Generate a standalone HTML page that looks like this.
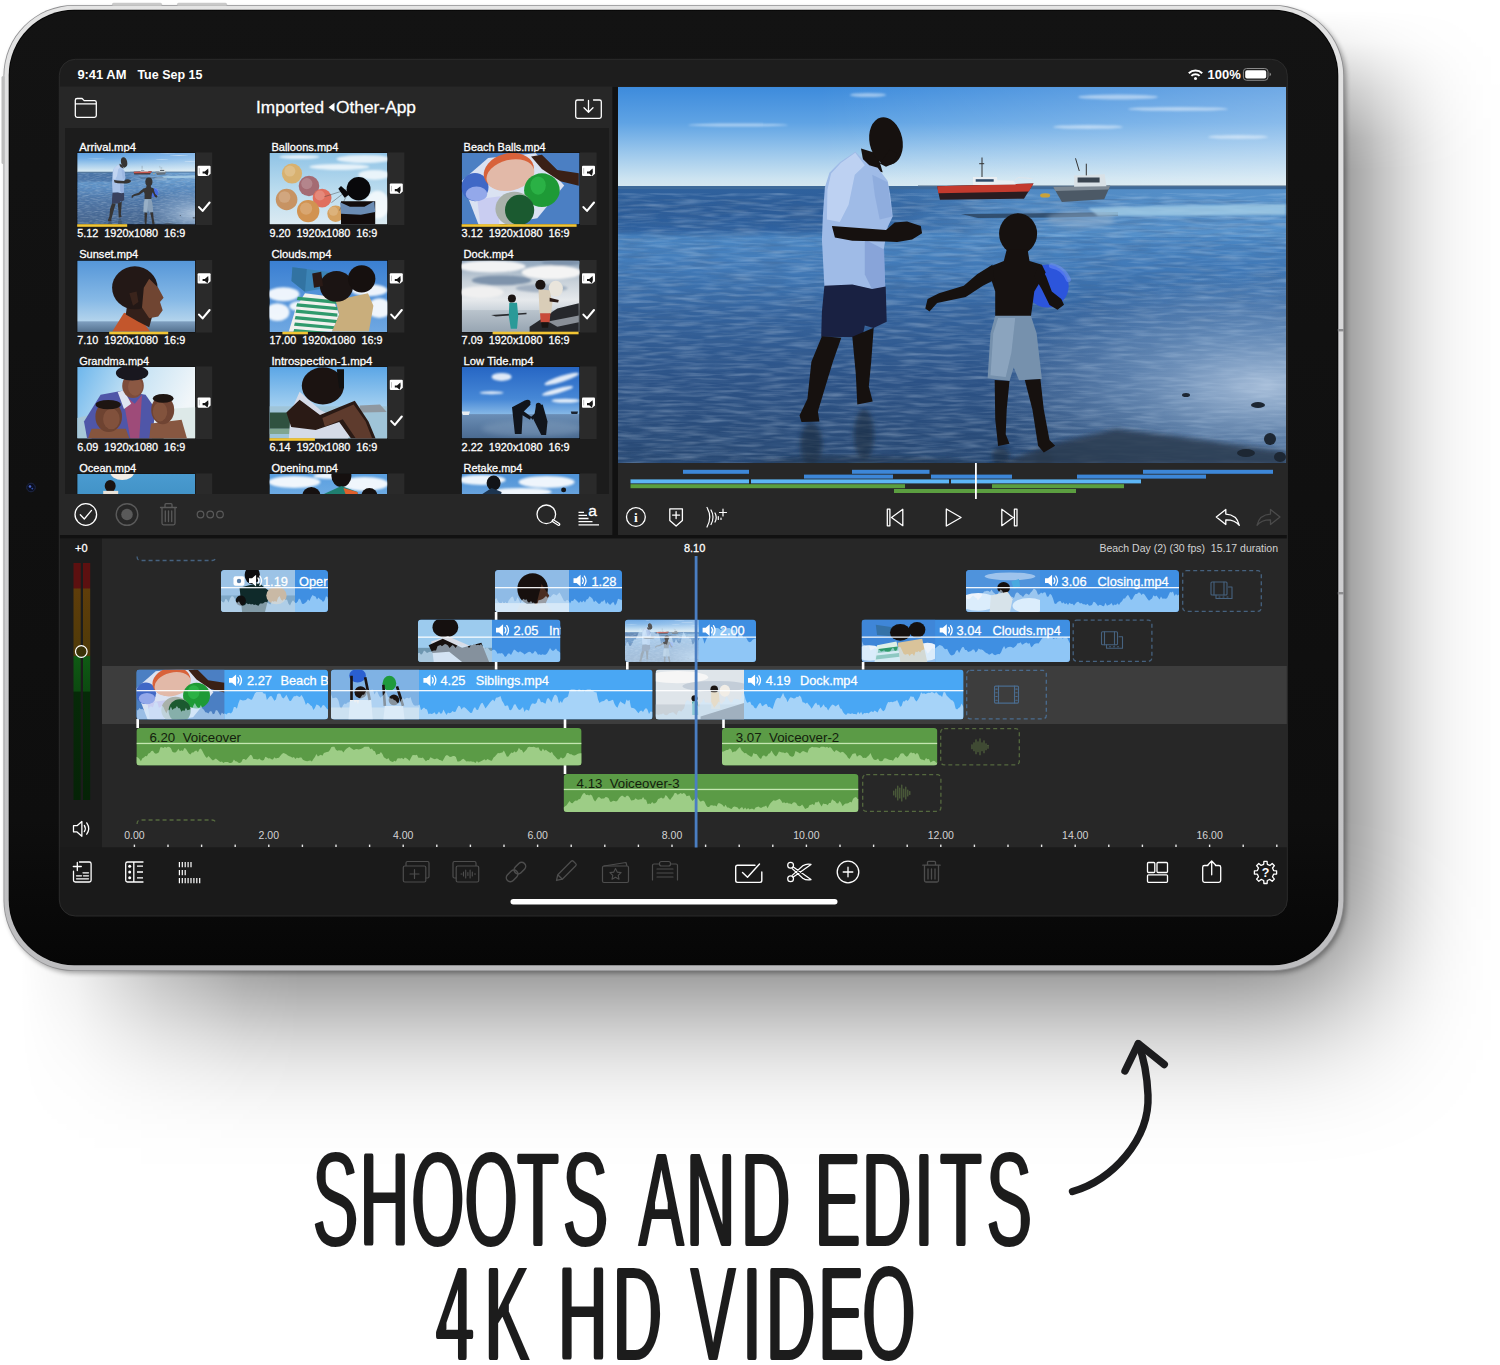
<!DOCTYPE html><html lang="en"><head><meta charset="utf-8"><title>Shoots and edits 4K HD video</title>
<style>html,body{margin:0;padding:0;background:#fff}body{width:1500px;height:1365px;overflow:hidden;position:relative}svg{display:block}text{font-family:"Liberation Sans",sans-serif;white-space:pre}</style></head><body>
<svg width="1500" height="1365" viewBox="0 0 1500 1365">
<defs>
<linearGradient id="gSky" x1="0" y1="0" x2="0" y2="1">
<stop offset="0" stop-color="#3d8bdc"/><stop offset=".35" stop-color="#5fa3e4"/><stop offset=".65" stop-color="#9cc8ec"/><stop offset=".9" stop-color="#cde4f1"/><stop offset="1" stop-color="#d8e9ef"/></linearGradient>
<linearGradient id="gSkyR" x1="0" y1="0" x2="1" y2="0"><stop offset=".3" stop-color="#fff" stop-opacity="0"/><stop offset="1" stop-color="#fff" stop-opacity=".26"/></linearGradient>
<linearGradient id="gSea" x1="0" y1="0" x2="0" y2="1">
<stop offset="0" stop-color="#2f619d"/><stop offset=".08" stop-color="#2c5c98"/><stop offset=".15" stop-color="#2f62a0"/><stop offset=".18" stop-color="#4a86c3"/><stop offset=".3" stop-color="#4078b6"/><stop offset=".45" stop-color="#34639d"/><stop offset=".7" stop-color="#2c5286"/><stop offset="1" stop-color="#284872"/></linearGradient>
<linearGradient id="gSeaR" x1="0" y1="0" x2="1" y2="0"><stop offset="0" stop-color="#5b97d0" stop-opacity="0"/><stop offset=".35" stop-color="#5b97d0" stop-opacity="0"/><stop offset=".6" stop-color="#5b97d0" stop-opacity=".75"/><stop offset="1" stop-color="#5b97d0" stop-opacity=".9"/></linearGradient>
<radialGradient id="gGlow" cx=".97" cy=".72" r=".42"><stop offset="0" stop-color="#c6d9ee" stop-opacity=".8"/><stop offset=".5" stop-color="#9fbfe0" stop-opacity=".4"/><stop offset="1" stop-color="#9fbfe0" stop-opacity="0"/></radialGradient>
<filter id="fRip" x="0" y="0" width="1" height="1"><feTurbulence type="fractalNoise" baseFrequency="0.035 0.3" numOctaves="2" seed="7"/><feColorMatrix type="matrix" values="0 0 0 0 0.8  0 0 0 0 0.9  0 0 0 0 1  1.5 0 0 0 -0.62"/></filter>
<filter id="fRipD" x="0" y="0" width="1" height="1"><feTurbulence type="fractalNoise" baseFrequency="0.03 0.28" numOctaves="2" seed="3"/><feColorMatrix type="matrix" values="0 0 0 0 0.06  0 0 0 0 0.14  0 0 0 0 0.3  0 1.6 0 0 -0.6"/></filter>
<filter id="fB2"><feGaussianBlur stdDeviation="2.5"/></filter>
<filter id="fB1"><feGaussianBlur stdDeviation="1"/></filter>
<g id="beach"><rect width="668" height="102" fill="url(#gSky)"/>
<rect width="668" height="102" fill="url(#gSkyR)"/>
<g fill="#fff" opacity=".45" filter="url(#fB1)"><ellipse cx="250" cy="8" rx="18" ry="2"/><ellipse cx="500" cy="10" rx="40" ry="2.5"/><ellipse cx="470" cy="40" rx="35" ry="2"/><ellipse cx="560" cy="22" rx="50" ry="2"/><ellipse cx="120" cy="38" rx="50" ry="1.5"/><ellipse cx="620" cy="50" rx="30" ry="2"/></g>
<rect y="102" width="668" height="274" fill="url(#gSea)"/>
<rect x="0" y="102" width="668" height="48" fill="url(#gSeaR)"/>
<rect y="112" width="668" height="264" filter="url(#fRipD)" opacity=".5"/>
<rect y="106" width="668" height="270" filter="url(#fRip)" opacity=".38"/>
<rect y="102" width="668" height="274" fill="url(#gGlow)"/>
<rect y="99" width="668" height="3.2" fill="#3f6b9a"/>
<rect x="300" y="98.2" width="368" height="1.4" fill="#5d7893" opacity=".7"/>
<path d="M343 127 L440 126 L500 125 L500 129 L440 130.5 L360 131 Z" fill="#2b4563" opacity=".85"/>
<path d="M470 121 L560 118.5 L668 117 L668 128 L560 129 L480 129 Z" fill="#a3cee8" opacity=".8" filter="url(#fB1)"/>
<polygon points="319.2,99.2 415.5,96.5 406,111.7 321.9,112.8" fill="#2a1c20"/>
<polygon points="319.2,99.2 415.5,96.5 410.8,104.6 320.3,106.3" fill="#c33a2e"/>
<polygon points="355,90 378.9,90 379.4,93.2 395.7,93.8 397.8,97.6 355,98.1" fill="#e9eef2"/>
<rect x="357.7" y="92.2" width="18" height="2.5" fill="#2d4a6a"/>
<path d="M364 70.5 V90 M361.2 76.7 h5" stroke="#333" stroke-width="1" fill="none"/>
<path d="M395.7 93.8 L400.5 90.5 L414.6 91.6" stroke="#dfe5ea" stroke-width=".8" fill="none"/>
<polygon points="435.2,99.7 492.2,98.7 486.2,112.2 443.9,114.9" fill="#4c5966"/>
<polygon points="435.2,99.7 492.2,98.7 490.5,102.5 437.4,104.1" fill="#7d8994"/>
<polygon points="456.1,88.4 486.7,87.3 488.4,99.2 456.1,99.7" fill="#d9e1e6"/>
<rect x="459.6" y="90.5" width="22" height="5" fill="#3a4550"/>
<path d="M468.3 76.7 V88.4 M457.5 71.3 L461.3 84" stroke="#333" stroke-width="1" fill="none"/>
<ellipse cx="462.9" cy="132.3" rx="34" ry="9" fill="#9db6cf" opacity=".45" filter="url(#fB2)"/>
<ellipse cx="427.1" cy="108.4" rx="5" ry="2.2" fill="#c9a23a"/>
<g fill="#14202e" opacity=".5" filter="url(#fB2)"><ellipse cx="193.2" cy="357.3" rx="11" ry="22"/><ellipse cx="246" cy="347.8" rx="10" ry="26"/><ellipse cx="382.9" cy="369.5" rx="9" ry="10"/><ellipse cx="426.3" cy="373.5" rx="9" ry="9"/></g>
<polygon points="380,378 430,358 498,342 556,349 668,365 668,378" fill="#2a3a50" opacity=".85" filter="url(#fB2)"/>
<polygon points="120,378 200,368 330,372 380,378" fill="#22344c" opacity=".6" filter="url(#fB2)"/>
<g fill="#1d2733"><ellipse cx="640" cy="318" rx="7" ry="3"/><ellipse cx="652" cy="352" rx="6" ry="6"/><ellipse cx="628" cy="366" rx="9" ry="4"/><ellipse cx="568" cy="308" rx="4" ry="2"/><ellipse cx="662" cy="370" rx="6" ry="5"/></g>
<polygon points="243,61.6 259.2,66.6 264.7,85.3 246.8,82.8" fill="#16110f"/>
<ellipse cx="268" cy="54.1" rx="16.5" ry="24" transform="rotate(-12 268 54.1)" fill="#16110f"/>
<polygon points="271.7,62.8 279.2,66.6 275.4,76.6 268,79.8 261.7,76.6" fill="#16110f"/>
<polygon points="237.3,64.8 221.8,75.3 211.4,85.8 206.9,100.2 204.9,127.6 203.9,152.6 206.4,199.4 234.3,197.9 254.2,202.4 267.2,199.9 265.7,162.5 269.7,140.1 274.7,129.6 272.2,107.7 269.7,94 259.7,80.8 251.3,78.3" fill="#9fbbe7"/>
<polygon points="237.3,65.8 223.1,75.8 213.1,86.5 209.4,102.7 208.9,132.6 221.8,135.1 230.6,117.7 236.8,87.8 246.8,78.3" fill="#c2d5f3" opacity=".85"/>
<polygon points="246.8,152.6 266.2,162.5 267.2,199.9 254.2,202.4 246.8,187.5" fill="#829fd6" opacity=".8"/>
<polygon points="254.2,87.8 269.7,95.2 274.2,129.6 261.7,132.6 256.7,107.7" fill="#86a3d8" opacity=".6"/>
<polygon points="213.9,138.9 234.3,140.6 268,143.1 276.7,135.6 289.1,134.6 302.8,138.9 304.1,146.3 294.1,152.6 279.2,155.1 268,154.6 234.3,153.8 216.9,150.6" fill="#16110f"/>
<polygon points="206.4,198.7 234.3,197.4 254.2,201.9 267.7,199.4 268.7,234.8 255.5,241 246.8,238.5 244.3,250.3 203.2,249.8 203.9,224.8" fill="#192142"/>
<polygon points="203.9,249.3 223.3,250.8 214.9,274.7 207.4,299.6 199.9,324.5 201.4,334.5 183.5,335 181.5,328.5 189.4,312.1 193.4,274.7" fill="#16110f"/>
<polygon points="234.3,249.8 255.7,240.8 253.2,274.7 250.8,299.6 254.7,314.6 239.3,317.5 237.8,287.1" fill="#16110f"/>
<circle cx="429.2" cy="199.1" r="21.5" fill="#2c55dc"/>
<path d="M433.4 178.7 a21.5 21.5 0 0 1 17 14" stroke="#6f90ff" stroke-width="5" fill="none" opacity=".55" stroke-linecap="round"/>
<ellipse cx="400.1" cy="146.7" rx="19" ry="20.5" fill="#16110f"/>
<polygon points="388.7,162.5 409.6,162.5 411.5,174 423.9,177.8 427.7,185.4 416.3,204.4 412.9,229.6 377.2,229.6 377.2,204.4 373.4,193 371.5,179.7 385.8,174" fill="#16110f"/>
<polygon points="374.4,177.8 359.1,187.3 345.8,198.7 321,206.3 309.6,212 307.3,221.6 311.5,224.4 319.1,215.9 347.7,210.1 364.9,198.7 376.3,193" fill="#16110f"/>
<polygon points="421,176.8 428.1,189.2 433.8,204.4 443.3,212 446,217.8 439.5,222.7 431.5,218.1 423.9,202.5 416.3,189.2" fill="#16110f"/>
<polygon points="377.2,228.8 412.9,228.8 418.6,246.3 423.9,292 401,293.2 395.7,280.6 391.5,294 369.6,291.3 372.5,246.3" fill="#7691ad"/>
<polygon points="380.1,231.1 397.2,231.1 393.4,265.4 387.7,290.1 372.5,288.2 375.3,246.3" fill="#93abc4" opacity=".75"/>
<polygon points="376.7,293 391.5,294 388.7,322.5 387.7,347.3 391.5,356.8 380.1,359.1 377.2,332" fill="#16110f"/>
<polygon points="406.8,293 422.4,292 425.8,322.5 431.5,353 437.2,358.7 425.8,365.4 420.1,358.7 414.4,322.5" fill="#16110f"/></g>
<filter id="fShadow" filterUnits="userSpaceOnUse" x="-600" y="-600" width="2400" height="2300"><feGaussianBlur stdDeviation="62 75"/></filter>
<linearGradient id="lgTop" gradientUnits="userSpaceOnUse" x1="0" y1="10" x2="0" y2="170"><stop offset="0" stop-color="#fff" stop-opacity="0"/><stop offset=".2" stop-color="#fff" stop-opacity=".12"/><stop offset=".5" stop-color="#fff" stop-opacity=".55"/><stop offset=".8" stop-color="#fff" stop-opacity=".9"/><stop offset="1" stop-color="#fff" stop-opacity="1"/></linearGradient>
<linearGradient id="lgLeft" gradientUnits="userSpaceOnUse" x1="20" y1="0" x2="300" y2="0"><stop offset="0" stop-color="#fff" stop-opacity="0"/><stop offset=".2" stop-color="#fff" stop-opacity=".15"/><stop offset=".5" stop-color="#fff" stop-opacity=".6"/><stop offset=".8" stop-color="#fff" stop-opacity=".92"/><stop offset="1" stop-color="#fff" stop-opacity="1"/></linearGradient>
<mask id="mTop" maskUnits="userSpaceOnUse" x="0" y="0" width="1500" height="1365"><rect width="1500" height="1365" fill="url(#lgTop)"/></mask>
<mask id="mLeft" maskUnits="userSpaceOnUse" x="0" y="0" width="1500" height="1365"><rect width="1500" height="1365" fill="url(#lgLeft)"/></mask>
<linearGradient id="gFrame" x1="0" y1="0" x2="0" y2="1"><stop offset="0" stop-color="#e4e4e4"/><stop offset=".5" stop-color="#d2d2d4"/><stop offset="1" stop-color="#bdbdbf"/></linearGradient>
<linearGradient id="gBezel" x1="0" y1="0" x2="0" y2="1"><stop offset="0" stop-color="#131313"/><stop offset=".85" stop-color="#0e0e0e"/><stop offset="1" stop-color="#060606"/></linearGradient>
<clipPath id="cScreen"><rect x="59.3" y="59.3" width="1228" height="856.7" rx="16"/></clipPath>
<clipPath id="cGrid"><rect x="65" y="128" width="544" height="366"/></clipPath>
<clipPath id="cVideo"><rect x="618" y="87" width="668.5" height="376"/></clipPath>
<clipPath id="cTL"><rect x="102" y="538" width="1185" height="309"/></clipPath>
<linearGradient id="gMeter" x1="0" y1="0" x2="0" y2="1"><stop offset="0" stop-color="#5c1010"/><stop offset=".105" stop-color="#5c1010"/><stop offset=".11" stop-color="#5f3d0a"/><stop offset=".39" stop-color="#4f3a08"/><stop offset=".395" stop-color="#0f5a14"/><stop offset=".54" stop-color="#0c4a10"/><stop offset=".545" stop-color="#062a08"/><stop offset="1" stop-color="#052306"/></linearGradient>

</defs>
<rect width="1500" height="1365" fill="#fff"/>
<g mask="url(#mTop)"><g mask="url(#mLeft)"><g filter="url(#fShadow)"><rect x="-300" y="-300" width="1660" height="1290" fill="#000" opacity=".64"/></g></g></g>
<rect x="6" y="8" width="1340" height="965" rx="70" fill="#000" opacity=".35" filter="url(#fB2)"/>
<rect x="3.5" y="5" width="1340.5" height="966" rx="70.5" fill="#8f8f91"/>
<rect x="4.3" y="5.8" width="1338.9" height="964.4" rx="69.8" fill="url(#gFrame)"/>
<rect x="8.7" y="9.8" width="1329.6" height="955.4" rx="65.5" fill="#050505"/>
<rect x="9.7" y="10.8" width="1327.6" height="953.4" rx="64.5" fill="url(#gBezel)"/>
<rect x="112" y="2.8" width="50" height="3" rx="1.5" fill="#c9c9c9"/><rect x="177" y="2.8" width="50" height="3" rx="1.5" fill="#c9c9c9"/>
<rect x="1.5" y="76" width="3" height="88" rx="1.5" fill="#bdbdbd"/>
<rect x="1337.8" y="329" width="6" height="2.4" fill="#8d8d8f"/><rect x="1337.8" y="592" width="6" height="2.4" fill="#8d8d8f"/>
<circle cx="31" cy="487.5" r="4.3" fill="#0b0f22" stroke="#1d2746" stroke-width="1"/><circle cx="30" cy="486.5" r="1.3" fill="#4a66c8"/><circle cx="32.3" cy="488.6" r=".9" fill="#3450a8"/>
<g clip-path="url(#cScreen)">
<rect x="59" y="59" width="1229" height="857" fill="#1a1a1a"/>
<rect x="59" y="59" width="1229" height="28" fill="#1d1d1d"/>
<rect x="59" y="86.5" width="553.5" height="448.5" fill="#272727"/>
<rect x="65" y="128" width="544" height="366" fill="#1c1c1c"/>
<rect x="612.5" y="87" width="5.5" height="451" fill="#111"/>
<rect x="618" y="86.5" width="669.5" height="448.5" fill="#272727"/>
<rect x="59" y="535" width="1229" height="3.5" fill="#111"/>
<rect x="59" y="538.5" width="43" height="309" fill="#1c1c1c"/>
<rect x="102" y="538.5" width="1186" height="309" fill="#272727"/>
<rect x="102" y="666" width="1186" height="58" fill="#3d3d3d"/>
<rect x="59" y="847.5" width="1229" height="70" fill="#1a1a1a"/>
<text x="77.4" y="79.2" font-size="13" fill="#fff" font-weight="bold" textLength="49" lengthAdjust="spacingAndGlyphs" >9:41 AM</text>
<text x="137.4" y="79.2" font-size="13" fill="#fff" font-weight="bold" textLength="65" lengthAdjust="spacingAndGlyphs" >Tue Sep 15</text>
<text x="1207.6" y="78.8" font-size="13" fill="#fff" font-weight="bold" textLength="33.2" lengthAdjust="spacingAndGlyphs" >100%</text>
<g fill="none" stroke="#fff" stroke-width="2" stroke-linecap="butt"><path d="M1188.8 73.2a9.6 9.6 0 0 1 13.4 0"/><path d="M1191.4 75.9a5.8 5.8 0 0 1 8.2 0"/></g><circle cx="1195.5" cy="78.6" r="1.5" fill="#fff"/><rect x="1243.4" y="68.5" width="24.6" height="11.8" rx="3.2" fill="none" stroke="#8a8a8a" stroke-width="1"/><rect x="1245.2" y="70.3" width="21" height="8.2" rx="1.8" fill="#fff"/><path d="M1269.6 72.6v3.6q1.4-.5 1.4-1.8t-1.4-1.8z" fill="#8a8a8a"/>
<path d="M75.3 100.6v14.9q0 1.8 1.8 1.8h17.4q1.8 0 1.8-1.8v-13.1q0-1.8-1.8-1.8h-10.3l-2.1-2.1h-5q-1.8 0-1.8 1.8z M75.3 103.8h21" stroke="#fff" fill="none" stroke-width="1.3" stroke-linecap="round" stroke-linejoin="round"/><path d="M583.5 100h-6q-1.8 0-1.8 1.8v14.8q0 1.8 1.8 1.8h22q1.8 0 1.8-1.8v-14.8q0-1.8-1.8-1.8h-6 M588.5 100.5v11.5 M584 107.8l4.5 4.5l4.5-4.5" stroke="#fff" fill="none" stroke-width="1.3" stroke-linecap="round" stroke-linejoin="round"/>
<text x="256" y="113.3" font-size="17" fill="#fff" stroke="#fff" stroke-width=".28" textLength="68" lengthAdjust="spacingAndGlyphs" >Imported</text>
<path d="M334.5 102.8v9l-6-4.5z" fill="#fff"/>
<text x="336" y="113.3" font-size="17" fill="#fff" stroke="#fff" stroke-width=".28" textLength="80" lengthAdjust="spacingAndGlyphs" >Other-App</text>
<g clip-path="url(#cGrid)">
<text x="79.2" y="150.7" font-size="11" fill="#fff" stroke="#fff" stroke-width=".28" textLength="56.7" lengthAdjust="spacingAndGlyphs" >Arrival.mp4</text>
<rect x="77.2" y="152.5" width="135" height="72.5" fill="#2a2a2a"/>
<rect x="76.8" y="152.5" width="118.8" height="72.5" fill="#0a0a0a"/>
<svg x="77.2" y="153" width="118" height="71.5" viewBox="0 0 118 72" preserveAspectRatio="none" overflow="hidden">
<svg x="0" y="0" width="118" height="72" viewBox="18 10 629 340" preserveAspectRatio="none"><use href="#beach"/><rect x="18" y="10" width="629" height="340" fill="#dfeaf4" opacity=".16"/></svg>
</svg>
<rect x="77.2" y="224.2" width="50" height="2.6" fill="#f2c534"/>
<g transform="translate(197.6 165.8)"><path d="M1 0h11q1 0 1 1v7l-2.6 2.3H1q-1 0-1-1V1q0-1 1-1z" fill="#fff"/><path d="M5 5.6h2.2l3.4-2.8q.9 3.5-.7 7.2l-2.7-2.2h-2.2z" fill="#161616"/><path d="M1.7 2.3v5.6" stroke="#999" stroke-width=".6"/></g>
<path d="M199 207.1 l3.6 3.8 l7 -8.4" stroke="#fff" stroke-width="2.1" fill="none" stroke-linecap="round" stroke-linejoin="round"/>
<text x="77.2" y="236.8" font-size="11" fill="#fff" stroke="#fff" stroke-width=".28" textLength="108" lengthAdjust="spacingAndGlyphs" >5.12  1920x1080  16:9</text>
<text x="271.4" y="150.7" font-size="11" fill="#fff" stroke="#fff" stroke-width=".28" textLength="67" lengthAdjust="spacingAndGlyphs" >Balloons.mp4</text>
<rect x="269.4" y="152.5" width="135" height="72.5" fill="#2a2a2a"/>
<rect x="269" y="152.5" width="118.8" height="72.5" fill="#0a0a0a"/>
<svg x="269.4" y="153" width="118" height="71.5" viewBox="0 0 118 72" preserveAspectRatio="none" overflow="hidden">
<linearGradient id="tgBal" x1="0" y1="0" x2="0" y2="1"><stop offset="0" stop-color="#8fc3e6"/><stop offset="0.5" stop-color="#b9dbee"/><stop offset="1" stop-color="#dbeaf2"/></linearGradient><rect width="118" height="72" fill="url(#tgBal)"/><g fill="#fff" opacity=".75" filter="url(#fB1)"><ellipse cx="95" cy="6" rx="28" ry="4"/><ellipse cx="70" cy="14" rx="30" ry="3"/><ellipse cx="105" cy="22" rx="16" ry="5"/><ellipse cx="30" cy="4" rx="20" ry="2"/><ellipse cx="108" cy="52" rx="12" ry="14"/></g><ellipse cx="22.6" cy="20.7" rx="10.1" ry="10.1" fill="#d8b16f" /><ellipse cx="20.5" cy="18.2" rx="5.5" ry="5.5" fill="#fff" opacity=".18"/><ellipse cx="17.2" cy="46.8" rx="10.8" ry="10.8" fill="#c79363" /><ellipse cx="15.1" cy="44.3" rx="5.9" ry="5.9" fill="#fff" opacity=".18"/><ellipse cx="39.6" cy="33.3" rx="10.3" ry="10.3" fill="#a46b73" /><ellipse cx="37.4" cy="30.8" rx="5.6" ry="5.6" fill="#fff" opacity=".18"/><ellipse cx="66.2" cy="61.2" rx="8.3" ry="8.3" fill="#d5a15f" /><ellipse cx="64" cy="58.7" rx="4.6" ry="4.6" fill="#fff" opacity=".18"/><ellipse cx="52.7" cy="45.4" rx="9.4" ry="9.4" fill="#e06f5e" /><ellipse cx="50.5" cy="42.8" rx="5.1" ry="5.1" fill="#fff" opacity=".18"/><ellipse cx="38.8" cy="58.5" rx="11.2" ry="11.2" fill="#d19351" /><ellipse cx="36.7" cy="56" rx="6.1" ry="6.1" fill="#fff" opacity=".18"/><path d="M62 50 L80 36 M55 44 L80 36 M70 58 L80 37" stroke="#333" stroke-width=".4"/><ellipse cx="89.2" cy="36" rx="11.9" ry="11.9" fill="#08080a" /><polygon points="75.2,45 68.9,36 71.6,33.3 80.6,41.4" fill="#08080a" /><polygon points="71.6,48.6 105.8,48.6 105.8,72 71.6,72" fill="#120c0c" /><polygon points="70.7,49.5 80.6,54 95,54 104.9,48.6 105.8,59.4 91.4,62.1 71.6,61.2" fill="#6b8cb4" />
</svg>
<g transform="translate(389.8 183.5)"><path d="M1 0h11q1 0 1 1v7l-2.6 2.3H1q-1 0-1-1V1q0-1 1-1z" fill="#fff"/><path d="M5 5.6h2.2l3.4-2.8q.9 3.5-.7 7.2l-2.7-2.2h-2.2z" fill="#161616"/><path d="M1.7 2.3v5.6" stroke="#999" stroke-width=".6"/></g>
<text x="269.4" y="236.8" font-size="11" fill="#fff" stroke="#fff" stroke-width=".28" textLength="108" lengthAdjust="spacingAndGlyphs" >9.20  1920x1080  16:9</text>
<text x="463.6" y="150.7" font-size="11" fill="#fff" stroke="#fff" stroke-width=".28" textLength="82" lengthAdjust="spacingAndGlyphs" >Beach Balls.mp4</text>
<rect x="461.6" y="152.5" width="135" height="72.5" fill="#2a2a2a"/>
<rect x="461.2" y="152.5" width="118.8" height="72.5" fill="#0a0a0a"/>
<svg x="461.6" y="153" width="118" height="71.5" viewBox="0 0 118 72" preserveAspectRatio="none" overflow="hidden">
<rect width="118" height="72" fill="#4b7fc3"/><polygon points="0,28.2 26.5,5.1 74.2,0.2 102.6,32.8 75.7,65.8 34.2,72.8 17.2,72.8" fill="#e6eaf6" opacity=".92"/><polygon points="15.7,46.6 38.8,43.5 37.2,72.8 18.8,72.8" fill="#c4c8f0" opacity=".8"/><ellipse cx="13.4" cy="34.3" rx="13.5" ry="14.2" fill="#4068c6" /><ellipse cx="14.9" cy="41.2" rx="10.8" ry="7.4" fill="#93a8ea" /><ellipse cx="47.2" cy="18.6" rx="25.4" ry="18.2" fill="#d8623a" transform="rotate(-14 47.2 18.6)"/><ellipse cx="48.8" cy="22.3" rx="24.3" ry="15.4" fill="#e2b9a8" transform="rotate(-14 48.8 22.3)"/><ellipse cx="80.3" cy="37.4" rx="17.8" ry="16.9" fill="#1e9a36" /><ellipse cx="76.5" cy="32.8" rx="7.7" ry="9.2" fill="#35c452" opacity=".55"/><ellipse cx="52.6" cy="56.2" rx="18.8" ry="17.2" fill="#a9b1aa" /><ellipse cx="58" cy="57.4" rx="14.6" ry="15.4" fill="#1b5a30" /><polygon points="69.5,3.5 80.3,1.7 95.7,17.1 117.2,20.5 117.2,33.1 98.8,28.5 80.3,16.2" fill="#3a2016" />
</svg>
<rect x="461.6" y="224.2" width="115" height="2.6" fill="#f2c534"/>
<g transform="translate(582 165.8)"><path d="M1 0h11q1 0 1 1v7l-2.6 2.3H1q-1 0-1-1V1q0-1 1-1z" fill="#fff"/><path d="M5 5.6h2.2l3.4-2.8q.9 3.5-.7 7.2l-2.7-2.2h-2.2z" fill="#161616"/><path d="M1.7 2.3v5.6" stroke="#999" stroke-width=".6"/></g>
<path d="M583.4 207.1 l3.6 3.8 l7 -8.4" stroke="#fff" stroke-width="2.1" fill="none" stroke-linecap="round" stroke-linejoin="round"/>
<text x="461.6" y="236.8" font-size="11" fill="#fff" stroke="#fff" stroke-width=".28" textLength="108" lengthAdjust="spacingAndGlyphs" >3.12  1920x1080  16:9</text>
<text x="79.2" y="258.2" font-size="11" fill="#fff" stroke="#fff" stroke-width=".28" textLength="59" lengthAdjust="spacingAndGlyphs" >Sunset.mp4</text>
<rect x="77.2" y="260" width="135" height="72.5" fill="#2a2a2a"/>
<rect x="76.8" y="260" width="118.8" height="72.5" fill="#0a0a0a"/>
<svg x="77.2" y="260.5" width="118" height="71.5" viewBox="0 0 118 72" preserveAspectRatio="none" overflow="hidden">
<linearGradient id="tgSun" x1="0" y1="0" x2="0" y2="1"><stop offset="0" stop-color="#5596d8"/><stop offset="0.55" stop-color="#86b9e6"/><stop offset="0.84" stop-color="#b2d3ec"/><stop offset="0.86" stop-color="#7d9dbd"/><stop offset="1" stop-color="#54718f"/></linearGradient><rect width="118" height="72" fill="url(#tgSun)"/><polygon points="46.8,52.7 35.1,71.6 72.9,71.6 65.7,61.7 54,54.5" fill="#c3562c" /><polygon points="50.4,41.9 77.4,47.3 72,67.1 61.2,61.7 48.6,54.5" fill="#33201a" /><ellipse cx="57.6" cy="27.5" rx="22.7" ry="21.6" fill="#231816" /><polygon points="72,18.5 81,27.5 86.4,37.4 82.8,41.9 85.5,50 81,56.3 72,58.1 64.8,47.3 66.6,27.5" fill="#704532" /><polygon points="52.2,32.9 59.4,31.1 61.2,41.9 55.8,45.5" fill="#3a241c" />
</svg>
<rect x="109.2" y="331.7" width="59" height="2.6" fill="#f2c534"/>
<g transform="translate(197.6 273.3)"><path d="M1 0h11q1 0 1 1v7l-2.6 2.3H1q-1 0-1-1V1q0-1 1-1z" fill="#fff"/><path d="M5 5.6h2.2l3.4-2.8q.9 3.5-.7 7.2l-2.7-2.2h-2.2z" fill="#161616"/><path d="M1.7 2.3v5.6" stroke="#999" stroke-width=".6"/></g>
<path d="M199 314.6 l3.6 3.8 l7 -8.4" stroke="#fff" stroke-width="2.1" fill="none" stroke-linecap="round" stroke-linejoin="round"/>
<text x="77.2" y="344.3" font-size="11" fill="#fff" stroke="#fff" stroke-width=".28" textLength="108" lengthAdjust="spacingAndGlyphs" >7.10  1920x1080  16:9</text>
<text x="271.4" y="258.2" font-size="11" fill="#fff" stroke="#fff" stroke-width=".28" textLength="60" lengthAdjust="spacingAndGlyphs" >Clouds.mp4</text>
<rect x="269.4" y="260" width="135" height="72.5" fill="#2a2a2a"/>
<rect x="269" y="260" width="118.8" height="72.5" fill="#0a0a0a"/>
<svg x="269.4" y="260.5" width="118" height="71.5" viewBox="0 0 118 72" preserveAspectRatio="none" overflow="hidden">
<linearGradient id="tgClo" x1="0" y1="0" x2="0" y2="1"><stop offset="0" stop-color="#3a7fd2"/><stop offset="1" stop-color="#6fa8e2"/></linearGradient><rect width="118" height="72" fill="url(#tgClo)"/><g fill="#fff" opacity=".9" filter="url(#fB1)"><ellipse cx="14" cy="34" rx="16" ry="7"/><ellipse cx="8" cy="52" rx="12" ry="9"/><ellipse cx="100" cy="30" rx="18" ry="6"/><ellipse cx="110" cy="48" rx="12" ry="10"/><ellipse cx="30" cy="46" rx="10" ry="5"/></g><polygon points="23,6.8 59.9,11.6 57.6,27.5 35.6,31.4 22.1,20.6" fill="#3c84b6" /><polygon points="23,6.8 37.4,8.6 35.6,31.4 22.1,20.6" fill="#3273a2" /><polygon points="35.6,32.9 62.6,36.5 69.8,54.5 62.6,71.6 19.4,71.6 26.6,47.3" fill="#f1f1ee" /><polygon points="28.4,36.5 68,40.4 68,43.7 27.5,39.7" fill="#2f9a6c" /><polygon points="27.7,43 68,46.9 68,50.2 26.8,46.2" fill="#2f9a6c" /><polygon points="27,49.4 68,53.4 68,56.6 26.1,52.7" fill="#2f9a6c" /><polygon points="26.2,55.9 68,59.9 68,63.1 25.3,59.2" fill="#2f9a6c" /><polygon points="25.5,62.4 68,66.4 68,69.6 24.6,65.6" fill="#2f9a6c" /><polygon points="24.8,68.9 68,72.8 68,76.1 23.9,72.1" fill="#2f9a6c" /><polygon points="66.2,40.1 98.6,32.9 104,45.5 99.5,71.6 62.6,71.6 69.8,54.5" fill="#c9ae7c" /><ellipse cx="67.1" cy="26" rx="16.6" ry="15.5" fill="#1b1413" /><ellipse cx="92.3" cy="18.5" rx="13.7" ry="13.7" fill="#16100f" /><polygon points="42.8,13.1 51.8,11.3 53.6,25.7 44.6,27.5" fill="#2a1a16" />
</svg>
<rect x="282.4" y="331.7" width="25.5" height="2.6" fill="#f2c534"/>
<g transform="translate(389.8 273.3)"><path d="M1 0h11q1 0 1 1v7l-2.6 2.3H1q-1 0-1-1V1q0-1 1-1z" fill="#fff"/><path d="M5 5.6h2.2l3.4-2.8q.9 3.5-.7 7.2l-2.7-2.2h-2.2z" fill="#161616"/><path d="M1.7 2.3v5.6" stroke="#999" stroke-width=".6"/></g>
<path d="M391.2 314.6 l3.6 3.8 l7 -8.4" stroke="#fff" stroke-width="2.1" fill="none" stroke-linecap="round" stroke-linejoin="round"/>
<text x="269.4" y="344.3" font-size="11" fill="#fff" stroke="#fff" stroke-width=".28" textLength="113" lengthAdjust="spacingAndGlyphs" >17.00  1920x1080  16:9</text>
<text x="463.6" y="258.2" font-size="11" fill="#fff" stroke="#fff" stroke-width=".28" textLength="50" lengthAdjust="spacingAndGlyphs" >Dock.mp4</text>
<rect x="461.6" y="260" width="135" height="72.5" fill="#2a2a2a"/>
<rect x="461.2" y="260" width="118.8" height="72.5" fill="#0a0a0a"/>
<svg x="461.6" y="260.5" width="118" height="71.5" viewBox="0 0 118 72" preserveAspectRatio="none" overflow="hidden">
<linearGradient id="tgDock" x1="0" y1="0" x2="0" y2="1"><stop offset="0" stop-color="#8fa5bc"/><stop offset="0.3" stop-color="#c9d2da"/><stop offset="0.55" stop-color="#e6e9ec"/><stop offset="0.69" stop-color="#cdd5dc"/><stop offset="0.7" stop-color="#b9c3cc"/><stop offset="1" stop-color="#97a5b2"/></linearGradient><rect width="118" height="72" fill="url(#tgDock)"/><g filter="url(#fB1)"><ellipse cx="30" cy="6" rx="34" ry="6" fill="#f2f3f4"/><ellipse cx="90" cy="12" rx="30" ry="7" fill="#f4f4f4"/><ellipse cx="40" cy="20" rx="30" ry="5" fill="#7e93ab"/><ellipse cx="20" cy="32" rx="22" ry="6" fill="#f0f0f0"/><ellipse cx="80" cy="28" rx="26" ry="4" fill="#8b9eb4" opacity=".7"/><ellipse cx="100" cy="2" rx="20" ry="3" fill="#7d92aa"/></g><polygon points="68,66.8 95.7,48.3 117.2,43 117.2,72.2 68,72.2" fill="#26282c" /><polygon points="86.5,61.4 117.2,55.3 117.2,62.2 95.7,66.8" fill="#8a9098" /><polygon points="29.5,54.8 64.9,52.7 64.9,54.2 34.2,56.3" fill="#2a2c30" /><ellipse cx="50.3" cy="38.3" rx="4" ry="4" fill="#1a1412" /><polygon points="47.7,42.5 55.4,42.5 56.6,56 55.4,68.7 49.2,68.7 47.2,56" fill="#2a9a98" /><ellipse cx="94.2" cy="28.3" rx="7.1" ry="8" fill="#e9e5dc" /><ellipse cx="78.8" cy="24.5" rx="5.1" ry="5.1" fill="#1a1412" /><polygon points="76.9,29.1 88,29.9 90.8,42.2 89.5,53.3 78,53.3" fill="#d9cdb8" /><polygon points="78.5,53 88.8,53 88,62.5 79.1,62.5" fill="#c94b3a" /><polygon points="79.5,62.2 87.2,62.2 86.5,67.6 80.3,67.6" fill="#1a1412" /><polygon points="88,37.6 97.2,39.9 96.5,42.2 88,41.4" fill="#2a1a16" />
</svg>
<rect x="492.6" y="331.7" width="86" height="2.6" fill="#f2c534"/>
<g transform="translate(582 273.3)"><path d="M1 0h11q1 0 1 1v7l-2.6 2.3H1q-1 0-1-1V1q0-1 1-1z" fill="#fff"/><path d="M5 5.6h2.2l3.4-2.8q.9 3.5-.7 7.2l-2.7-2.2h-2.2z" fill="#161616"/><path d="M1.7 2.3v5.6" stroke="#999" stroke-width=".6"/></g>
<path d="M583.4 314.6 l3.6 3.8 l7 -8.4" stroke="#fff" stroke-width="2.1" fill="none" stroke-linecap="round" stroke-linejoin="round"/>
<text x="461.6" y="344.3" font-size="11" fill="#fff" stroke="#fff" stroke-width=".28" textLength="108" lengthAdjust="spacingAndGlyphs" >7.09  1920x1080  16:9</text>
<text x="79.2" y="364.7" font-size="11" fill="#fff" stroke="#fff" stroke-width=".28" textLength="70" lengthAdjust="spacingAndGlyphs" >Grandma.mp4</text>
<rect x="77.2" y="366.5" width="135" height="72.5" fill="#2a2a2a"/>
<rect x="76.8" y="366.5" width="118.8" height="72.5" fill="#0a0a0a"/>
<svg x="77.2" y="367" width="118" height="71.5" viewBox="0 0 118 72" preserveAspectRatio="none" overflow="hidden">
<linearGradient id="tgGr" x1="0" y1="0" x2="1" y2="0.3"><stop offset="0" stop-color="#6db6ec"/><stop offset="0.5" stop-color="#c5e2f4"/><stop offset="1" stop-color="#f1f6f9"/></linearGradient><rect width="118" height="72" fill="url(#tgGr)"/><polygon points="86.4,42.4 118.8,40.6 118.8,72.1 86.4,72.1" fill="#dde9e8" /><polygon points="-0,51.4 14.4,47.8 14.4,72.1 -0,72.1" fill="#a8c8d8" /><polygon points="23.4,28 45,24 68.4,28 78.3,42.4 74.7,72.1 9.9,72.1 6.8,55" fill="#4f56a8" /><polygon points="45,26.2 57.6,37 64.8,28 62.1,72.1 53.1,72.1" fill="#b8486a" opacity=".75"/><polygon points="40.5,25.3 46.8,23.5 54,37 46.8,42.4" fill="#dfe4f2" /><ellipse cx="55.8" cy="19" rx="10.8" ry="12.2" fill="#7d4c3a" /><ellipse cx="58" cy="19.9" rx="7.2" ry="9" fill="#94604a" opacity=".6"/><ellipse cx="54.9" cy="6" rx="16.2" ry="7.6" fill="#19171f" /><polygon points="14.4,62.2 48.6,62.2 52.2,72.1 10.8,72.1" fill="#86553e" /><polygon points="73.8,56.8 104.4,53.2 109.8,72.1 72,72.1" fill="#875741" /><ellipse cx="31.5" cy="50" rx="13.3" ry="15.5" fill="#6e4331" /><ellipse cx="34.2" cy="52.3" rx="8.3" ry="10.4" fill="#8d5c44" opacity=".6"/><ellipse cx="31" cy="37.9" rx="12.6" ry="4.7" fill="#1d1512" /><ellipse cx="85.5" cy="43.3" rx="11.5" ry="14.4" fill="#704433" /><ellipse cx="82.8" cy="45.1" rx="7.2" ry="9.7" fill="#8e5d45" opacity=".6"/><ellipse cx="86" cy="31.6" rx="10.4" ry="4.3" fill="#1d1512" />
</svg>
<g transform="translate(197.6 397.5)"><path d="M1 0h11q1 0 1 1v7l-2.6 2.3H1q-1 0-1-1V1q0-1 1-1z" fill="#fff"/><path d="M5 5.6h2.2l3.4-2.8q.9 3.5-.7 7.2l-2.7-2.2h-2.2z" fill="#161616"/><path d="M1.7 2.3v5.6" stroke="#999" stroke-width=".6"/></g>
<text x="77.2" y="450.8" font-size="11" fill="#fff" stroke="#fff" stroke-width=".28" textLength="108" lengthAdjust="spacingAndGlyphs" >6.09  1920x1080  16:9</text>
<text x="271.4" y="364.7" font-size="11" fill="#fff" stroke="#fff" stroke-width=".28" textLength="101" lengthAdjust="spacingAndGlyphs" >Introspection-1.mp4</text>
<rect x="269.4" y="366.5" width="135" height="72.5" fill="#2a2a2a"/>
<rect x="269" y="366.5" width="118.8" height="72.5" fill="#0a0a0a"/>
<svg x="269.4" y="367" width="118" height="71.5" viewBox="0 0 118 72" preserveAspectRatio="none" overflow="hidden">
<linearGradient id="tgIn" x1="0" y1="0" x2="0" y2="1"><stop offset="0" stop-color="#5ba6e6"/><stop offset="0.6" stop-color="#a9d3f1"/><stop offset="1" stop-color="#d6eaf6"/></linearGradient><rect width="118" height="72" fill="url(#tgIn)"/><polygon points="0.2,39.4 117.8,39.4 117.8,72.3 0.2,72.3" fill="#9fc4d8" /><polygon points="0.2,45.9 24.2,45.9 24.2,62.2 0.2,62.2" fill="#2f5240" /><polygon points="0.2,62.2 24.2,62.2 24.2,67.5 0.2,67.5" fill="#7fa590" /><polygon points="90.2,38.7 110.6,37.7 117.3,45.4 91.4,45.9" fill="#8f98a0" /><polygon points="30.2,25 50.6,43 86.6,62.2 78.2,72.3 19.4,72.3 21.3,45.4" fill="#d5dbe8" /><ellipse cx="53.5" cy="19" rx="21.1" ry="18.7" fill="#1b1311" /><polygon points="67.4,2.2 74.6,2.2 74.6,21.4 69.8,21.4" fill="#111" /><polygon points="17,45.9 30.2,32.9 50.6,48.3 85.4,33.9 99.1,55 106.3,72.3 81.8,72.3 69.8,55.5 46.3,63.4 21.8,60.3" fill="#2a1a15" /><polygon points="53,51.4 84.2,37.7 96.2,55 102.9,72.3 86.6,72.3 73.4,52.6 55.4,59.8" fill="#6b4433" opacity=".8"/>
</svg>
<rect x="269.4" y="438.2" width="45.5" height="2.6" fill="#f2c534"/>
<g transform="translate(389.8 379.8)"><path d="M1 0h11q1 0 1 1v7l-2.6 2.3H1q-1 0-1-1V1q0-1 1-1z" fill="#fff"/><path d="M5 5.6h2.2l3.4-2.8q.9 3.5-.7 7.2l-2.7-2.2h-2.2z" fill="#161616"/><path d="M1.7 2.3v5.6" stroke="#999" stroke-width=".6"/></g>
<path d="M391.2 421.1 l3.6 3.8 l7 -8.4" stroke="#fff" stroke-width="2.1" fill="none" stroke-linecap="round" stroke-linejoin="round"/>
<text x="269.4" y="450.8" font-size="11" fill="#fff" stroke="#fff" stroke-width=".28" textLength="108" lengthAdjust="spacingAndGlyphs" >6.14  1920x1080  16:9</text>
<text x="463.6" y="364.7" font-size="11" fill="#fff" stroke="#fff" stroke-width=".28" textLength="70" lengthAdjust="spacingAndGlyphs" >Low Tide.mp4</text>
<rect x="461.6" y="366.5" width="135" height="72.5" fill="#2a2a2a"/>
<rect x="461.2" y="366.5" width="118.8" height="72.5" fill="#0a0a0a"/>
<svg x="461.6" y="367" width="118" height="71.5" viewBox="0 0 118 72" preserveAspectRatio="none" overflow="hidden">
<linearGradient id="tgLT" x1="0" y1="0" x2="0" y2="1"><stop offset="0" stop-color="#2666c4"/><stop offset="0.45" stop-color="#4788d6"/><stop offset="0.66" stop-color="#86b8e6"/><stop offset="0.665" stop-color="#6a8db5"/><stop offset="1" stop-color="#4a6a90"/></linearGradient><rect width="118" height="72" fill="url(#tgLT)"/><g fill="#fff" opacity=".85" filter="url(#fB1)"><ellipse cx="100" cy="12" rx="18" ry="3" transform="rotate(-18 100 12)"/><ellipse cx="96" cy="24" rx="16" ry="2.5" transform="rotate(-15 96 24)"/><ellipse cx="40" cy="10" rx="10" ry="4"/><ellipse cx="104" cy="34" rx="14" ry="2"/><ellipse cx="30" cy="26" rx="12" ry="1.5"/></g><ellipse cx="70" cy="62" rx="50" ry="8" fill="#8aa6c2" opacity=".4" filter="url(#fB2)"/><polygon points="50.4,40.6 63.6,33.4 69.1,37.7 61.2,45.9 60,67.5 53.3,67.5" fill="#11151c" /><ellipse cx="66" cy="35.8" rx="2.9" ry="2.9" fill="#11151c" /><polygon points="60,43 69.6,50.2 68.4,53.1 58.8,47.3" fill="#11151c" /><polygon points="74.4,38.7 81.1,37.7 85.9,55 84.5,68.4 79.7,68.4 72,53.1" fill="#11151c" /><ellipse cx="76.8" cy="38.7" rx="2.6" ry="2.6" fill="#11151c" /><polygon points="74.4,45.9 69.1,50.7 70.8,53.1 76.3,49.2" fill="#11151c" /><polygon points="-0,44.9 8.4,44.9 7.2,48.3 1.2,48.3" fill="#e8eef2" /><polygon points="109.2,44.9 116.4,44.9 115.7,47.3 109.9,47.3" fill="#1c2430" />
</svg>
<g transform="translate(582 397.5)"><path d="M1 0h11q1 0 1 1v7l-2.6 2.3H1q-1 0-1-1V1q0-1 1-1z" fill="#fff"/><path d="M5 5.6h2.2l3.4-2.8q.9 3.5-.7 7.2l-2.7-2.2h-2.2z" fill="#161616"/><path d="M1.7 2.3v5.6" stroke="#999" stroke-width=".6"/></g>
<text x="461.6" y="450.8" font-size="11" fill="#fff" stroke="#fff" stroke-width=".28" textLength="108" lengthAdjust="spacingAndGlyphs" >2.22  1920x1080  16:9</text>
<text x="79.2" y="471.7" font-size="11" fill="#fff" stroke="#fff" stroke-width=".28" textLength="57" lengthAdjust="spacingAndGlyphs" >Ocean.mp4</text>
<rect x="77.2" y="473.5" width="135" height="72.5" fill="#2a2a2a"/>
<rect x="76.8" y="473.5" width="118.8" height="72.5" fill="#0a0a0a"/>
<svg x="77.2" y="474" width="118" height="71.5" viewBox="0 0 118 72" preserveAspectRatio="none" overflow="hidden">
<linearGradient id="tgOc" x1="0" y1="0" x2="0" y2="1"><stop offset="0" stop-color="#4a9bd0"/><stop offset="1" stop-color="#2f7fb2"/></linearGradient><rect width="118" height="72" fill="url(#tgOc)"/><ellipse cx="45" cy="-2" rx="12" ry="8" fill="#f3ede4"/><ellipse cx="33" cy="12" rx="5.5" ry="6" fill="#1a1412"/><rect x="26" y="17" width="15" height="30" fill="#e8e2d8"/>
</svg>
<text x="271.4" y="471.7" font-size="11" fill="#fff" stroke="#fff" stroke-width=".28" textLength="66.6" lengthAdjust="spacingAndGlyphs" >Opening.mp4</text>
<rect x="269.4" y="473.5" width="135" height="72.5" fill="#2a2a2a"/>
<rect x="269" y="473.5" width="118.8" height="72.5" fill="#0a0a0a"/>
<svg x="269.4" y="474" width="118" height="71.5" viewBox="0 0 118 72" preserveAspectRatio="none" overflow="hidden">
<linearGradient id="tgOp" x1="0" y1="0" x2="0" y2="1"><stop offset="0" stop-color="#5a9fe0"/><stop offset="1" stop-color="#9cc8ec"/></linearGradient><rect width="118" height="72" fill="url(#tgOp)"/><g fill="#fff" opacity=".9" filter="url(#fB1)"><ellipse cx="25" cy="8" rx="26" ry="6"/><ellipse cx="95" cy="10" rx="24" ry="7"/><ellipse cx="60" cy="2" rx="16" ry="3"/></g><ellipse cx="72" cy="2" rx="10" ry="11" fill="#15100f"/><ellipse cx="42" cy="22" rx="9" ry="9" fill="#15100f"/><ellipse cx="100" cy="22" rx="8" ry="8" fill="#15100f"/><polygon points="55,20 72,12 88,18 92,40 52,40" fill="#1f7f70"/><polygon points="74,14 88,18 90,30 78,26" fill="#e0602c"/>
</svg>
<text x="463.6" y="471.7" font-size="11" fill="#fff" stroke="#fff" stroke-width=".28" textLength="58.8" lengthAdjust="spacingAndGlyphs" >Retake.mp4</text>
<rect x="461.6" y="473.5" width="135" height="72.5" fill="#2a2a2a"/>
<rect x="461.2" y="473.5" width="118.8" height="72.5" fill="#0a0a0a"/>
<svg x="461.6" y="474" width="118" height="71.5" viewBox="0 0 118 72" preserveAspectRatio="none" overflow="hidden">
<linearGradient id="tgRe" x1="0" y1="0" x2="0" y2="1"><stop offset="0" stop-color="#4f93d8"/><stop offset="1" stop-color="#a5cbea"/></linearGradient><rect width="118" height="72" fill="url(#tgRe)"/><g fill="#fff" opacity=".9" filter="url(#fB1)"><ellipse cx="20" cy="6" rx="24" ry="5"/><ellipse cx="85" cy="8" rx="28" ry="6"/><ellipse cx="60" cy="18" rx="30" ry="4"/></g><ellipse cx="32" cy="9" rx="7" ry="7.5" fill="#121418"/><polygon points="18,22 30,14 40,18 36,40 14,40" fill="#1d3550"/><ellipse cx="102" cy="16" rx="2.5" ry="2.5" fill="#121418"/>
</svg>
</g>
<circle cx="85.8" cy="514.5" r="10.8" stroke="#fff" fill="none" stroke-width="1.3" stroke-linecap="round" stroke-linejoin="round"/><path d="M80.3 514.8l4 4.2l7.2-8.6" stroke="#fff" fill="none" stroke-width="1.3" stroke-linecap="round" stroke-linejoin="round"/><circle cx="127" cy="514.5" r="10.8" stroke="#5a5a5a" fill="none" stroke-width="1.4" stroke-linecap="round" stroke-linejoin="round"/><circle cx="127" cy="514.5" r="5.8" fill="#5a5a5a"/><path d="M160.5 507.5h16 M165 507.3v-2.6q0-1 1-1h5q1 0 1 1v2.6 M162 507.8v15.5q0 1.5 1.5 1.5h10q1.5 0 1.5-1.5v-15.5 M165.3 511v10.5 M168.5 511v10.5 M171.7 511v10.5" stroke="#5a5a5a" fill="none" stroke-width="1.3" stroke-linecap="round" stroke-linejoin="round"/><circle cx="200.5" cy="514.5" r="3.3" stroke="#5a5a5a" fill="none" stroke-width="1.2" stroke-linecap="round" stroke-linejoin="round"/><circle cx="210.2" cy="514.5" r="3.3" stroke="#5a5a5a" fill="none" stroke-width="1.2" stroke-linecap="round" stroke-linejoin="round"/><circle cx="220" cy="514.5" r="3.3" stroke="#5a5a5a" fill="none" stroke-width="1.2" stroke-linecap="round" stroke-linejoin="round"/><circle cx="546.3" cy="514.3" r="9.3" stroke="#fff" fill="none" stroke-width="1.3" stroke-linecap="round" stroke-linejoin="round"/><path d="M553.2 520.8l5.6 3.6" stroke="#fff" stroke-width="3.2" stroke-linecap="round"/><path d="M553.6 521.1l5 3.2" stroke="#282828" stroke-width="1" stroke-linecap="round"/><path d="M578.5 512.3h5.5 M578.5 515.4h8.5 M578.5 518.5h10 M578.5 521.6h14 M578.5 524.8h20.5" stroke="#fff" stroke-width="1.3" fill="none"/>
<text x="588.3" y="516.2" font-size="15.5" fill="#fff" stroke="#fff" stroke-width=".28" >a</text>
<g clip-path="url(#cVideo)"><g transform="translate(618 87)"><use href="#beach"/></g></g>
<rect x="683" y="469.8" width="66" height="4" fill="#3d87d8"/>
<rect x="852" y="469.8" width="77.5" height="4" fill="#3d87d8"/>
<rect x="1143" y="469.8" width="130" height="4" fill="#3d87d8"/>
<rect x="804" y="474.6" width="89" height="4" fill="#3d87d8"/>
<rect x="931" y="474.6" width="81" height="4" fill="#3d87d8"/>
<rect x="1077" y="474.6" width="129" height="4" fill="#3d87d8"/>
<rect x="630.5" y="479.4" width="118.5" height="4" fill="#5db6f6"/>
<rect x="751" y="479.4" width="198" height="4" fill="#5db6f6"/>
<rect x="951" y="479.4" width="190" height="4" fill="#5db6f6"/>
<rect x="630.5" y="484.2" width="274.5" height="4" fill="#5b9e40"/>
<rect x="992" y="484.2" width="132" height="4" fill="#5b9e40"/>
<rect x="894" y="489" width="182" height="4" fill="#5b9e40"/>
<rect x="975" y="463" width="1.8" height="36" fill="#fff"/>
<circle cx="635.9" cy="517" r="9.4" stroke="#fff" fill="none" stroke-width="1.3" stroke-linecap="round" stroke-linejoin="round"/><path d="M669.8 508.8h12.6v11.6l-6.3 5.6l-6.3-5.6z M676.1 511.6v7 M672.6 515.1h7" stroke="#fff" fill="none" stroke-width="1.3" stroke-linecap="round" stroke-linejoin="round"/><path d="M707 507.5q5.5 9.5 0 19.5 M711 510q4 7 0 14.5 M715 513q2.5 4.5 0 9 M718.3 516.5v3 M721 518v1.5 M723 509v7 M719.5 512.5h7" stroke="#fff" fill="none" stroke-width="1.2" stroke-linecap="round" stroke-linejoin="round"/><path d="M887.3 509.2h2.6v16.6h-2.6z M902.8 509.3v16.4l-11.3-8.2z" stroke="#fff" fill="none" stroke-width="1.3" stroke-linecap="round" stroke-linejoin="round"/><path d="M946.3 509v17l14.8-8.5z" stroke="#fff" fill="none" stroke-width="1.3" stroke-linecap="round" stroke-linejoin="round"/><path d="M1014.4 509.2h2.6v16.6h-2.6z M1001.8 509.3v16.4l11.3-8.2z" stroke="#fff" fill="none" stroke-width="1.3" stroke-linecap="round" stroke-linejoin="round"/><path d="M1216.3 517l9.5-7.5v4.6q11 .4 13.5 11.2q-4.5-5.6-13.5-5.4v4.6z" stroke="#fff" fill="none" stroke-width="1.3" stroke-linecap="round" stroke-linejoin="round"/><path d="M1216.3 517l9.5-7.5v4.6q11 .4 13.5 11.2q-4.5-5.6-13.5-5.4v4.6z" transform="translate(2496.3 0) scale(-1 1)" stroke="#4a4a4a" fill="none" stroke-width="1.3" stroke-linecap="round" stroke-linejoin="round"/>
<text x="635.9" y="522" font-size="13.5" fill="#fff" text-anchor="middle" style="font-family:Liberation Serif,serif;font-weight:bold">i</text>
<text x="75" y="552.3" font-size="11" fill="#fff" stroke="#fff" stroke-width=".28" >+0</text>
<rect x="73.5" y="563" width="7.2" height="237" fill="url(#gMeter)"/><rect x="83" y="563" width="7.2" height="237" fill="url(#gMeter)"/>
<circle cx="81.3" cy="651.5" r="5.8" fill="#3a3208" stroke="#fff" stroke-width="1.2"/>
<g transform="translate(73.5 821) scale(1.35)"><path d="M0 3.5h2.6l3.6-3.2v11l-3.6-3.2h-2.6z" fill="none" stroke="#fff" stroke-width=".95" stroke-linejoin="round"/><path d="M8 3.3q1.5 2.3 0 4.6 M9.8 1.4q2.9 4.2 0 8.4" stroke="#fff" stroke-width=".95" fill="none" stroke-linecap="round"/></g>
<g clip-path="url(#cTL)">
<rect x="494.8" y="612" width="2.6" height="57.6" fill="#fff"/>
<rect x="626" y="662" width="2.6" height="7.6" fill="#fff"/>
<rect x="861.8" y="662" width="2.6" height="7.6" fill="#fff"/>
<rect x="136.4" y="719" width="2.6" height="9" fill="#fff"/>
<rect x="563.7" y="719" width="2.6" height="55" fill="#fff"/>
<rect x="722.2" y="719" width="2.6" height="9" fill="#fff"/>
<clipPath id="cc1"><rect x="221" y="570" width="107" height="42" rx="3.5"/></clipPath>
<g clip-path="url(#cc1)">
<rect x="221" y="570" width="107" height="42" fill="#3f8fe2"/>
<svg x="221" y="570" width="74" height="42" viewBox="0 0 118 66" preserveAspectRatio="xMidYMid slice" overflow="hidden"><rect width="118" height="66" fill="#9cc3e6"/><rect y="40" width="118" height="26" fill="#7fa8c8"/><ellipse cx="50" cy="8" rx="12" ry="14" fill="#0d0d0f"/><polygon points="30,28 60,20 78,34 70,66 34,66" fill="#0f2a2a"/><ellipse cx="88" cy="40" rx="16" ry="14" fill="#c9b9a5"/><ellipse cx="32" cy="48" rx="8" ry="8" fill="#101010"/></svg>
<svg x="221" y="570" width="74" height="42" viewBox="221 570 74 42" overflow="hidden"><polygon points="221,612 221,600.6 222.5,602.1 224,602.6 225.5,599.1 227,599.5 228.5,602.4 230,598.5 231.5,596.2 233,596.2 234.5,598.2 236,601.8 237.5,602.7 239,601.2 240.5,604.3 242,605.7 243.5,605.6 245,605.1 246.5,603.1 248,604.2 249.5,603.7 251,604.5 252.5,604 254,605.1 255.5,604.5 257,605.2 258.5,605.8 260,603.5 261.5,603.5 263,603.6 264.5,602.2 266,601.7 267.5,602.5 269,603.8 270.5,604.5 272,601 273.5,601.7 275,601 276.5,602.1 278,597.8 279.5,596.1 281,599.5 282.5,600.7 284,598.9 285.5,600.1 287,599.6 288.5,603.7 290,605.4 291.5,602.3 293,600.3 294.5,602.1 296,603.3 297.5,601.7 299,598.4 300.5,599.7 302,603.8 303.5,604.1 305,603.1 306.5,601.7 308,599.2 309.5,600.9 311,597.4 312.5,595.1 314,595.9 315.5,596.4 317,599.6 318.5,597.4 320,599.3 321.5,600.1 323,601.9 324.5,600.5 326,596.3 327.5,597.1 328,599.4 328,612" fill="#cfe7fc" opacity=".6"/></svg>
<svg x="295" y="570" width="33" height="42" viewBox="295 570 33 42" overflow="hidden"><polygon points="221,612 221,600.6 222.5,602.1 224,602.6 225.5,599.1 227,599.5 228.5,602.4 230,598.5 231.5,596.2 233,596.2 234.5,598.2 236,601.8 237.5,602.7 239,601.2 240.5,604.3 242,605.7 243.5,605.6 245,605.1 246.5,603.1 248,604.2 249.5,603.7 251,604.5 252.5,604 254,605.1 255.5,604.5 257,605.2 258.5,605.8 260,603.5 261.5,603.5 263,603.6 264.5,602.2 266,601.7 267.5,602.5 269,603.8 270.5,604.5 272,601 273.5,601.7 275,601 276.5,602.1 278,597.8 279.5,596.1 281,599.5 282.5,600.7 284,598.9 285.5,600.1 287,599.6 288.5,603.7 290,605.4 291.5,602.3 293,600.3 294.5,602.1 296,603.3 297.5,601.7 299,598.4 300.5,599.7 302,603.8 303.5,604.1 305,603.1 306.5,601.7 308,599.2 309.5,600.9 311,597.4 312.5,595.1 314,595.9 315.5,596.4 317,599.6 318.5,597.4 320,599.3 321.5,600.1 323,601.9 324.5,600.5 326,596.3 327.5,597.1 328,599.4 328,612" fill="#8fc6f6"/></svg>
<rect x="221" y="587" width="107" height="1.3" fill="#fff" opacity=".92"/>
<g transform="translate(249 574.2) scale(1.18)"><path d="M0 3.5h2.6l3.4-3v10l-3.4-3h-2.6z" fill="#fff"/><path d="M7.6 3.2q1.5 2.3 0 4.6 M9.2 1.6q2.8 3.9 0 7.8" stroke="#fff" stroke-width="1.1" fill="none" stroke-linecap="round"/></g>
<text x="263" y="585.5" font-size="12.8" fill="#fff" stroke="#fff" stroke-width=".28" >1.19</text>
<text x="299" y="585.5" font-size="12.8" fill="#fff" stroke="#fff" stroke-width=".28" >Oper</text>
</g>
<rect x="233.5" y="576.3" width="11" height="9.5" rx="2" fill="#fff"/><circle cx="239" cy="581" r="2.2" fill="#5a7fa8"/>
<clipPath id="cc2"><rect x="495" y="570" width="127" height="42" rx="3.5"/></clipPath>
<g clip-path="url(#cc2)">
<rect x="495" y="570" width="127" height="42" fill="#3f8fe2"/>
<svg x="495" y="570" width="74" height="42" viewBox="0 0 118 66" preserveAspectRatio="xMidYMid slice" overflow="hidden"><rect width="118" height="66" fill="#8fbbe6"/><rect y="52" width="118" height="14" fill="#dfe9f2"/><ellipse cx="60" cy="30" rx="24" ry="25" fill="#17100e"/><polygon points="74,22 86,40 80,54 66,54" fill="#4a2e22"/><polygon points="40,54 80,52 92,66 34,66" fill="#e8e6e4"/></svg>
<svg x="495" y="570" width="74" height="42" viewBox="495 570 74 42" overflow="hidden"><polygon points="495,612 495,599.3 496.5,597.9 498,601.4 499.5,602.7 501,604.7 502.5,601.3 504,604.2 505.5,601.7 507,604.7 508.5,600.7 510,598.8 511.5,596.9 513,596.5 514.5,601.2 516,600.9 517.5,597.1 519,599.8 520.5,603.3 522,600.2 523.5,598.7 525,600 526.5,599.2 528,602.2 529.5,602.4 531,600.9 532.5,603 534,602.6 535.5,605.4 537,605 538.5,600.3 540,599.9 541.5,599.6 543,598.7 544.5,597.4 546,596 547.5,597.8 549,597.3 550.5,597.2 552,595.3 553.5,593.9 555,594.6 556.5,595.4 558,593.9 559.5,592.6 561,595.1 562.5,597.9 564,601 565.5,601.5 567,599.7 568.5,600.7 570,603.4 571.5,600.7 573,600.9 574.5,598.7 576,600.1 577.5,601.6 579,603.1 580.5,601 582,602.4 583.5,600.6 585,602.5 586.5,599.4 588,599 589.5,596.2 591,597.3 592.5,598.8 594,602.3 595.5,600.6 597,602.3 598.5,603.8 600,603.8 601.5,601.4 603,601.6 604.5,599.6 606,604.2 607.5,602 609,604.2 610.5,604.8 612,602.7 613.5,602.1 615,605.6 616.5,603.4 618,598.7 619.5,599.3 621,599.8 622,600.2 622,612" fill="#cfe7fc" opacity=".6"/></svg>
<svg x="569" y="570" width="53" height="42" viewBox="569 570 53 42" overflow="hidden"><polygon points="495,612 495,599.3 496.5,597.9 498,601.4 499.5,602.7 501,604.7 502.5,601.3 504,604.2 505.5,601.7 507,604.7 508.5,600.7 510,598.8 511.5,596.9 513,596.5 514.5,601.2 516,600.9 517.5,597.1 519,599.8 520.5,603.3 522,600.2 523.5,598.7 525,600 526.5,599.2 528,602.2 529.5,602.4 531,600.9 532.5,603 534,602.6 535.5,605.4 537,605 538.5,600.3 540,599.9 541.5,599.6 543,598.7 544.5,597.4 546,596 547.5,597.8 549,597.3 550.5,597.2 552,595.3 553.5,593.9 555,594.6 556.5,595.4 558,593.9 559.5,592.6 561,595.1 562.5,597.9 564,601 565.5,601.5 567,599.7 568.5,600.7 570,603.4 571.5,600.7 573,600.9 574.5,598.7 576,600.1 577.5,601.6 579,603.1 580.5,601 582,602.4 583.5,600.6 585,602.5 586.5,599.4 588,599 589.5,596.2 591,597.3 592.5,598.8 594,602.3 595.5,600.6 597,602.3 598.5,603.8 600,603.8 601.5,601.4 603,601.6 604.5,599.6 606,604.2 607.5,602 609,604.2 610.5,604.8 612,602.7 613.5,602.1 615,605.6 616.5,603.4 618,598.7 619.5,599.3 621,599.8 622,600.2 622,612" fill="#8fc6f6"/></svg>
<rect x="495" y="587" width="127" height="1.3" fill="#fff" opacity=".92"/>
<g transform="translate(573.5 574.2) scale(1.18)"><path d="M0 3.5h2.6l3.4-3v10l-3.4-3h-2.6z" fill="#fff"/><path d="M7.6 3.2q1.5 2.3 0 4.6 M9.2 1.6q2.8 3.9 0 7.8" stroke="#fff" stroke-width="1.1" fill="none" stroke-linecap="round"/></g>
<text x="591.5" y="585.5" font-size="12.8" fill="#fff" stroke="#fff" stroke-width=".28" >1.28</text>
</g>
<clipPath id="cc3"><rect x="966" y="570" width="213" height="42" rx="3.5"/></clipPath>
<g clip-path="url(#cc3)">
<rect x="966" y="570" width="213" height="42" fill="#3f8fe2"/>
<svg x="966" y="570" width="74" height="42" viewBox="0 0 118 66" preserveAspectRatio="xMidYMid slice" overflow="hidden"><rect width="118" height="66" fill="#4f93dc"/><g fill="#fff" opacity=".9"><ellipse cx="20" cy="50" rx="30" ry="14"/><ellipse cx="100" cy="56" rx="26" ry="12"/><ellipse cx="70" cy="10" rx="40" ry="6" opacity=".5"/></g><polygon points="72,18 84,14 86,26 76,30" fill="#49a9e0"/><ellipse cx="60" cy="28" rx="10" ry="9" fill="#15100f"/><polygon points="40,40 66,34 74,46 70,66 38,66" fill="#e4dccf"/></svg>
<svg x="966" y="570" width="74" height="42" viewBox="966 570 74 42" overflow="hidden"><polygon points="966,612 966,598.2 967.5,598.9 969,599 970.5,598.6 972,596.2 973.5,595.6 975,597.4 976.5,598.1 978,600.5 979.5,598.4 981,596.9 982.5,594 984,591.6 985.5,591.3 987,590.8 988.5,591.1 990,592 991.5,589.5 993,592 994.5,593.2 996,595 997.5,594.3 999,591.8 1000.5,589.6 1002,590.5 1003.5,593.3 1005,592.6 1006.5,593.3 1008,592.7 1009.5,594.6 1011,596.6 1012.5,596.9 1014,598.1 1015.5,593.7 1017,592.2 1018.5,593 1020,594.8 1021.5,595.6 1023,596.9 1024.5,595.1 1026,593.5 1027.5,594.1 1029,595.1 1030.5,592.7 1032,591.2 1033.5,588.8 1035,588.9 1036.5,590.8 1038,594.8 1039.5,594.2 1041,592.6 1042.5,593.5 1044,592.3 1045.5,592.6 1047,596.7 1048.5,596.4 1050,593.8 1051.5,594.9 1053,598.5 1054.5,603.4 1056,604 1057.5,602.3 1059,601.2 1060.5,600.9 1062,603.6 1063.5,602.2 1065,604.3 1066.5,602.9 1068,605 1069.5,602.8 1071,604.1 1072.5,603.7 1074,605.5 1075.5,603.5 1077,602 1078.5,601.8 1080,603.5 1081.5,602.9 1083,604.3 1084.5,604.3 1086,605 1087.5,603.8 1089,605.8 1090.5,605.4 1092,605 1093.5,601.7 1095,602.3 1096.5,603.9 1098,606.1 1099.5,604.7 1101,605 1102.5,605.9 1104,606.2 1105.5,602.7 1107,605.8 1108.5,605.1 1110,604.5 1111.5,603.1 1113,605.8 1114.5,604.5 1116,604.9 1117.5,603.3 1119,604.9 1120.5,602.4 1122,601.2 1123.5,598.6 1125,598.4 1126.5,596.3 1128,594.7 1129.5,597.2 1131,600 1132.5,599 1134,596.1 1135.5,594.1 1137,594 1138.5,592.4 1140,592.7 1141.5,595.1 1143,593.6 1144.5,594.6 1146,596.8 1147.5,599.1 1149,600.8 1150.5,599.6 1152,598.4 1153.5,595.3 1155,596.5 1156.5,595.6 1158,597.4 1159.5,599.6 1161,596.4 1162.5,598.7 1164,598.6 1165.5,598.8 1167,598.2 1168.5,595.3 1170,592 1171.5,592.5 1173,591.5 1174.5,596.1 1176,594.1 1177.5,595.5 1179,594.6 1179,594.3 1179,612" fill="#cfe7fc" opacity=".6"/></svg>
<svg x="1040" y="570" width="139" height="42" viewBox="1040 570 139 42" overflow="hidden"><polygon points="966,612 966,598.2 967.5,598.9 969,599 970.5,598.6 972,596.2 973.5,595.6 975,597.4 976.5,598.1 978,600.5 979.5,598.4 981,596.9 982.5,594 984,591.6 985.5,591.3 987,590.8 988.5,591.1 990,592 991.5,589.5 993,592 994.5,593.2 996,595 997.5,594.3 999,591.8 1000.5,589.6 1002,590.5 1003.5,593.3 1005,592.6 1006.5,593.3 1008,592.7 1009.5,594.6 1011,596.6 1012.5,596.9 1014,598.1 1015.5,593.7 1017,592.2 1018.5,593 1020,594.8 1021.5,595.6 1023,596.9 1024.5,595.1 1026,593.5 1027.5,594.1 1029,595.1 1030.5,592.7 1032,591.2 1033.5,588.8 1035,588.9 1036.5,590.8 1038,594.8 1039.5,594.2 1041,592.6 1042.5,593.5 1044,592.3 1045.5,592.6 1047,596.7 1048.5,596.4 1050,593.8 1051.5,594.9 1053,598.5 1054.5,603.4 1056,604 1057.5,602.3 1059,601.2 1060.5,600.9 1062,603.6 1063.5,602.2 1065,604.3 1066.5,602.9 1068,605 1069.5,602.8 1071,604.1 1072.5,603.7 1074,605.5 1075.5,603.5 1077,602 1078.5,601.8 1080,603.5 1081.5,602.9 1083,604.3 1084.5,604.3 1086,605 1087.5,603.8 1089,605.8 1090.5,605.4 1092,605 1093.5,601.7 1095,602.3 1096.5,603.9 1098,606.1 1099.5,604.7 1101,605 1102.5,605.9 1104,606.2 1105.5,602.7 1107,605.8 1108.5,605.1 1110,604.5 1111.5,603.1 1113,605.8 1114.5,604.5 1116,604.9 1117.5,603.3 1119,604.9 1120.5,602.4 1122,601.2 1123.5,598.6 1125,598.4 1126.5,596.3 1128,594.7 1129.5,597.2 1131,600 1132.5,599 1134,596.1 1135.5,594.1 1137,594 1138.5,592.4 1140,592.7 1141.5,595.1 1143,593.6 1144.5,594.6 1146,596.8 1147.5,599.1 1149,600.8 1150.5,599.6 1152,598.4 1153.5,595.3 1155,596.5 1156.5,595.6 1158,597.4 1159.5,599.6 1161,596.4 1162.5,598.7 1164,598.6 1165.5,598.8 1167,598.2 1168.5,595.3 1170,592 1171.5,592.5 1173,591.5 1174.5,596.1 1176,594.1 1177.5,595.5 1179,594.6 1179,594.3 1179,612" fill="#8fc6f6"/></svg>
<rect x="966" y="587" width="213" height="1.3" fill="#fff" opacity=".92"/>
<g transform="translate(1045 574.2) scale(1.18)"><path d="M0 3.5h2.6l3.4-3v10l-3.4-3h-2.6z" fill="#fff"/><path d="M7.6 3.2q1.5 2.3 0 4.6 M9.2 1.6q2.8 3.9 0 7.8" stroke="#fff" stroke-width="1.1" fill="none" stroke-linecap="round"/></g>
<text x="1061.6" y="585.5" font-size="12.8" fill="#fff" stroke="#fff" stroke-width=".28" >3.06</text>
<text x="1097.6" y="585.5" font-size="12.8" fill="#fff" stroke="#fff" stroke-width=".28" >Closing.mp4</text>
</g>
<clipPath id="cc4"><rect x="418" y="619.5" width="142.5" height="42.5" rx="3.5"/></clipPath>
<g clip-path="url(#cc4)">
<rect x="418" y="619.5" width="142.5" height="42.5" fill="#3f8fe2"/>
<svg x="418" y="619.5" width="74" height="42.5" viewBox="0 0 118 66" preserveAspectRatio="xMidYMid slice" overflow="hidden"><rect width="118" height="66" fill="#9ccbee"/><rect y="44" width="118" height="22" fill="#6f97b0"/><ellipse cx="44" cy="12" rx="20" ry="16" fill="#15100f"/><polygon points="22,34 48,26 80,40 100,66 26,66" fill="#d9dde6"/><polygon points="18,40 40,30 70,44 100,36 112,66 70,66 50,50 24,52" fill="#17110f"/></svg>
<svg x="418" y="619.5" width="74" height="42.5" viewBox="418 619.5 74 42.5" overflow="hidden"><polygon points="418,662 418,653.3 419.5,652.7 421,654.8 422.5,653.6 424,650.4 425.5,651.6 427,653.1 428.5,652.3 430,651.8 431.5,651.8 433,650.7 434.5,650.6 436,650.4 437.5,646.3 439,645.6 440.5,645.1 442,646.2 443.5,645.1 445,644.1 446.5,644.5 448,645.4 449.5,647.9 451,646.6 452.5,644.9 454,645.9 455.5,648 457,645.9 458.5,644.1 460,644.9 461.5,646.1 463,645.5 464.5,646 466,646 467.5,646 469,647.9 470.5,646.1 472,644.6 473.5,645.1 475,644.1 476.5,645.2 478,644.7 479.5,645.3 481,644.1 482.5,645.9 484,647.1 485.5,648.5 487,647.5 488.5,648.4 490,650.6 491.5,651 493,649.8 494.5,649.7 496,650.9 497.5,653.8 499,653.2 500.5,653.6 502,653.1 503.5,654.5 505,657.1 506.5,656 508,653.4 509.5,653.5 511,655 512.5,652.2 514,649.6 515.5,650.3 517,651.7 518.5,652.4 520,651.2 521.5,652.3 523,652.9 524.5,654.5 526,653.4 527.5,652.4 529,651.8 530.5,652 532,653.8 533.5,653 535,650.7 536.5,652.3 538,654.8 539.5,654.2 541,655.1 542.5,654.3 544,654.7 545.5,654.7 547,653.5 548.5,651.1 550,648 551.5,650.1 553,651.1 554.5,649.9 556,648.5 557.5,650.8 559,651.4 560.5,653.1 560.5,652.6 560.5,662" fill="#cfe7fc" opacity=".6"/></svg>
<svg x="492" y="619.5" width="68.5" height="42.5" viewBox="492 619.5 68.5 42.5" overflow="hidden"><polygon points="418,662 418,653.3 419.5,652.7 421,654.8 422.5,653.6 424,650.4 425.5,651.6 427,653.1 428.5,652.3 430,651.8 431.5,651.8 433,650.7 434.5,650.6 436,650.4 437.5,646.3 439,645.6 440.5,645.1 442,646.2 443.5,645.1 445,644.1 446.5,644.5 448,645.4 449.5,647.9 451,646.6 452.5,644.9 454,645.9 455.5,648 457,645.9 458.5,644.1 460,644.9 461.5,646.1 463,645.5 464.5,646 466,646 467.5,646 469,647.9 470.5,646.1 472,644.6 473.5,645.1 475,644.1 476.5,645.2 478,644.7 479.5,645.3 481,644.1 482.5,645.9 484,647.1 485.5,648.5 487,647.5 488.5,648.4 490,650.6 491.5,651 493,649.8 494.5,649.7 496,650.9 497.5,653.8 499,653.2 500.5,653.6 502,653.1 503.5,654.5 505,657.1 506.5,656 508,653.4 509.5,653.5 511,655 512.5,652.2 514,649.6 515.5,650.3 517,651.7 518.5,652.4 520,651.2 521.5,652.3 523,652.9 524.5,654.5 526,653.4 527.5,652.4 529,651.8 530.5,652 532,653.8 533.5,653 535,650.7 536.5,652.3 538,654.8 539.5,654.2 541,655.1 542.5,654.3 544,654.7 545.5,654.7 547,653.5 548.5,651.1 550,648 551.5,650.1 553,651.1 554.5,649.9 556,648.5 557.5,650.8 559,651.4 560.5,653.1 560.5,652.6 560.5,662" fill="#8fc6f6"/></svg>
<rect x="418" y="636.5" width="142.5" height="1.3" fill="#fff" opacity=".92"/>
<g transform="translate(496 623.7) scale(1.18)"><path d="M0 3.5h2.6l3.4-3v10l-3.4-3h-2.6z" fill="#fff"/><path d="M7.6 3.2q1.5 2.3 0 4.6 M9.2 1.6q2.8 3.9 0 7.8" stroke="#fff" stroke-width="1.1" fill="none" stroke-linecap="round"/></g>
<text x="513.5" y="635" font-size="12.8" fill="#fff" stroke="#fff" stroke-width=".28" >2.05</text>
<text x="549" y="635" font-size="12.8" fill="#fff" stroke="#fff" stroke-width=".28" >Introspection</text>
</g>
<clipPath id="cc5"><rect x="625" y="619.5" width="131" height="42.5" rx="3.5"/></clipPath>
<g clip-path="url(#cc5)">
<rect x="625" y="619.5" width="131" height="42.5" fill="#3f8fe2"/>
<svg x="625" y="619.5" width="73.5" height="42.5" viewBox="0 0 118 66" preserveAspectRatio="xMidYMid slice" overflow="hidden"><svg width="118" height="66" viewBox="60 0 600 336" preserveAspectRatio="none"><use href="#beach"/><rect x="60" width="600" height="336" fill="#e8f1f8" opacity=".3"/></svg></svg>
<svg x="625" y="619.5" width="73.5" height="42.5" viewBox="625 619.5 73.5 42.5" overflow="hidden"><polygon points="625,662 625,646.6 626.5,642.8 628,642 629.5,646.3 631,645.6 632.5,643.1 634,639.5 635.5,639.6 637,636.4 638.5,632.7 640,628 641.5,630.2 643,632 644.5,629.2 646,630.3 647.5,636.2 649,635.5 650.5,633.5 652,630.1 653.5,630.1 655,633.6 656.5,634 658,632.1 659.5,636.3 661,643.5 662.5,641.7 664,644.3 665.5,644 667,644.8 668.5,639 670,636.5 671.5,636.6 673,642.2 674.5,642.4 676,638.8 677.5,642.1 679,643.6 680.5,643 682,636.2 683.5,631.4 685,634.6 686.5,637.7 688,636.8 689.5,638.6 691,638.7 692.5,644.4 694,643.3 695.5,639.5 697,636.9 698.5,640.7 700,636.7 701.5,637.2 703,638.4 704.5,643.8 706,640 707.5,636.8 709,635.7 710.5,636.9 712,632.3 713.5,628.6 715,628 716.5,628 718,628 719.5,629 721,630.2 722.5,628 724,628 725.5,629.6 727,628 728.5,628.1 730,628 731.5,630.2 733,630.1 734.5,629.6 736,636.2 737.5,637.4 739,633 740.5,633.2 742,635 743.5,637.7 745,636.8 746.5,638.2 748,641.3 749.5,642.3 751,641.8 752.5,639.7 754,639 755.5,638.5 756,638.2 756,662" fill="#cfe7fc" opacity=".6"/></svg>
<svg x="698.5" y="619.5" width="57.5" height="42.5" viewBox="698.5 619.5 57.5 42.5" overflow="hidden"><polygon points="625,662 625,646.6 626.5,642.8 628,642 629.5,646.3 631,645.6 632.5,643.1 634,639.5 635.5,639.6 637,636.4 638.5,632.7 640,628 641.5,630.2 643,632 644.5,629.2 646,630.3 647.5,636.2 649,635.5 650.5,633.5 652,630.1 653.5,630.1 655,633.6 656.5,634 658,632.1 659.5,636.3 661,643.5 662.5,641.7 664,644.3 665.5,644 667,644.8 668.5,639 670,636.5 671.5,636.6 673,642.2 674.5,642.4 676,638.8 677.5,642.1 679,643.6 680.5,643 682,636.2 683.5,631.4 685,634.6 686.5,637.7 688,636.8 689.5,638.6 691,638.7 692.5,644.4 694,643.3 695.5,639.5 697,636.9 698.5,640.7 700,636.7 701.5,637.2 703,638.4 704.5,643.8 706,640 707.5,636.8 709,635.7 710.5,636.9 712,632.3 713.5,628.6 715,628 716.5,628 718,628 719.5,629 721,630.2 722.5,628 724,628 725.5,629.6 727,628 728.5,628.1 730,628 731.5,630.2 733,630.1 734.5,629.6 736,636.2 737.5,637.4 739,633 740.5,633.2 742,635 743.5,637.7 745,636.8 746.5,638.2 748,641.3 749.5,642.3 751,641.8 752.5,639.7 754,639 755.5,638.5 756,638.2 756,662" fill="#8fc6f6"/></svg>
<rect x="625" y="636.5" width="131" height="1.3" fill="#fff" opacity=".92"/>
<g transform="translate(702.6 623.7) scale(1.18)"><path d="M0 3.5h2.6l3.4-3v10l-3.4-3h-2.6z" fill="#fff"/><path d="M7.6 3.2q1.5 2.3 0 4.6 M9.2 1.6q2.8 3.9 0 7.8" stroke="#fff" stroke-width="1.1" fill="none" stroke-linecap="round"/></g>
<text x="719.8" y="635" font-size="12.8" fill="#fff" stroke="#fff" stroke-width=".28" >2.00</text>
</g>
<clipPath id="cc6"><rect x="861.6" y="619.5" width="208.4" height="42.5" rx="3.5"/></clipPath>
<g clip-path="url(#cc6)">
<rect x="861.6" y="619.5" width="208.4" height="42.5" fill="#3f8fe2"/>
<svg x="861.6" y="619.5" width="73.5" height="42.5" viewBox="0 0 118 66" preserveAspectRatio="xMidYMid slice" overflow="hidden"><rect width="118" height="66" fill="#3f86d8"/><g fill="#fff" opacity=".9"><ellipse cx="14" cy="52" rx="22" ry="12"/><ellipse cx="104" cy="50" rx="20" ry="14"/></g><polygon points="24,8 50,12 48,26 26,24" fill="#3572a8"/><ellipse cx="62" cy="20" rx="16" ry="13" fill="#15100f"/><ellipse cx="88" cy="16" rx="13" ry="12" fill="#15100f"/><polygon points="26,40 56,34 64,66 22,66" fill="#dff0e8"/><polygon points="28,46 58,42 59,48 27,52" fill="#2f9a6c"/><polygon points="25,56 60,52 61,58 24,62" fill="#2f9a6c"/><polygon points="58,36 96,30 104,66 62,66" fill="#d9c39a"/></svg>
<svg x="861.6" y="619.5" width="73.5" height="42.5" viewBox="861.6 619.5 73.5 42.5" overflow="hidden"><polygon points="861.6,662 861.6,639.9 863.1,644.6 864.6,645.3 866.1,647.5 867.6,645.8 869.1,646.4 870.6,650.7 872.1,649.5 873.6,649.1 875.1,647.9 876.6,649.5 878.1,649.2 879.6,650 881.1,651.4 882.6,650.9 884.1,650.3 885.6,651.6 887.1,651.4 888.6,653.2 890.1,651.6 891.6,649.1 893.1,647.5 894.6,650.5 896.1,651.7 897.6,647.4 899.1,646.7 900.6,647.3 902.1,650.5 903.6,653.7 905.1,654.8 906.6,654.2 908.1,653.9 909.6,656.1 911.1,653.9 912.6,653.8 914.1,655.9 915.6,651.5 917.1,652.2 918.6,651.1 920.1,652.6 921.6,650.2 923.1,649.8 924.6,649.1 926.1,650.8 927.6,653.4 929.1,652.3 930.6,650.2 932.1,648.3 933.6,648.7 935.1,648.5 936.6,647.3 938.1,646.1 939.6,645 941.1,645.4 942.6,646.3 944.1,648.5 945.6,649.2 947.1,648.8 948.6,652.1 950.1,654.5 951.6,655.5 953.1,655 954.6,653.9 956.1,650.7 957.6,649.9 959.1,653 960.6,650.1 962.1,647.3 963.6,646.9 965.1,649.9 966.6,650 968.1,652 969.6,651.5 971.1,651.1 972.6,649.6 974.1,649.4 975.6,652.6 977.1,651.2 978.6,648.6 980.1,649.4 981.6,649.5 983.1,650.3 984.6,651.7 986.1,653 987.6,653.6 989.1,654.8 990.6,654 992.1,653.1 993.6,654.6 995.1,655.2 996.6,654.5 998.1,653.9 999.6,654.3 1001.1,652.2 1002.6,648.5 1004.1,646.1 1005.6,649 1007.1,647.5 1008.6,646.9 1010.1,646.8 1011.6,646.9 1013.1,647.9 1014.6,647.1 1016.1,645.8 1017.6,643.2 1019.1,643.2 1020.6,642.3 1022.1,644.7 1023.6,644.1 1025.1,643 1026.6,642.6 1028.1,643.8 1029.6,643.1 1031.1,647.2 1032.6,646.2 1034.1,644.3 1035.6,643.5 1037.1,643.2 1038.6,643.4 1040.1,641.2 1041.6,638.9 1043.1,637.4 1044.6,637.4 1046.1,637.4 1047.6,638 1049.1,637.5 1050.6,637.4 1052.1,637.4 1053.6,638.9 1055.1,638.1 1056.6,638.5 1058.1,637.4 1059.6,637.7 1061.1,637.7 1062.6,638.6 1064.1,637.7 1065.6,637.4 1067.1,637.4 1068.6,640.8 1070,643.4 1070,662" fill="#cfe7fc" opacity=".6"/></svg>
<svg x="935.1" y="619.5" width="134.9" height="42.5" viewBox="935.1 619.5 134.9 42.5" overflow="hidden"><polygon points="861.6,662 861.6,639.9 863.1,644.6 864.6,645.3 866.1,647.5 867.6,645.8 869.1,646.4 870.6,650.7 872.1,649.5 873.6,649.1 875.1,647.9 876.6,649.5 878.1,649.2 879.6,650 881.1,651.4 882.6,650.9 884.1,650.3 885.6,651.6 887.1,651.4 888.6,653.2 890.1,651.6 891.6,649.1 893.1,647.5 894.6,650.5 896.1,651.7 897.6,647.4 899.1,646.7 900.6,647.3 902.1,650.5 903.6,653.7 905.1,654.8 906.6,654.2 908.1,653.9 909.6,656.1 911.1,653.9 912.6,653.8 914.1,655.9 915.6,651.5 917.1,652.2 918.6,651.1 920.1,652.6 921.6,650.2 923.1,649.8 924.6,649.1 926.1,650.8 927.6,653.4 929.1,652.3 930.6,650.2 932.1,648.3 933.6,648.7 935.1,648.5 936.6,647.3 938.1,646.1 939.6,645 941.1,645.4 942.6,646.3 944.1,648.5 945.6,649.2 947.1,648.8 948.6,652.1 950.1,654.5 951.6,655.5 953.1,655 954.6,653.9 956.1,650.7 957.6,649.9 959.1,653 960.6,650.1 962.1,647.3 963.6,646.9 965.1,649.9 966.6,650 968.1,652 969.6,651.5 971.1,651.1 972.6,649.6 974.1,649.4 975.6,652.6 977.1,651.2 978.6,648.6 980.1,649.4 981.6,649.5 983.1,650.3 984.6,651.7 986.1,653 987.6,653.6 989.1,654.8 990.6,654 992.1,653.1 993.6,654.6 995.1,655.2 996.6,654.5 998.1,653.9 999.6,654.3 1001.1,652.2 1002.6,648.5 1004.1,646.1 1005.6,649 1007.1,647.5 1008.6,646.9 1010.1,646.8 1011.6,646.9 1013.1,647.9 1014.6,647.1 1016.1,645.8 1017.6,643.2 1019.1,643.2 1020.6,642.3 1022.1,644.7 1023.6,644.1 1025.1,643 1026.6,642.6 1028.1,643.8 1029.6,643.1 1031.1,647.2 1032.6,646.2 1034.1,644.3 1035.6,643.5 1037.1,643.2 1038.6,643.4 1040.1,641.2 1041.6,638.9 1043.1,637.4 1044.6,637.4 1046.1,637.4 1047.6,638 1049.1,637.5 1050.6,637.4 1052.1,637.4 1053.6,638.9 1055.1,638.1 1056.6,638.5 1058.1,637.4 1059.6,637.7 1061.1,637.7 1062.6,638.6 1064.1,637.7 1065.6,637.4 1067.1,637.4 1068.6,640.8 1070,643.4 1070,662" fill="#8fc6f6"/></svg>
<rect x="861.6" y="636.5" width="208.4" height="1.3" fill="#fff" opacity=".92"/>
<g transform="translate(939.7 623.7) scale(1.18)"><path d="M0 3.5h2.6l3.4-3v10l-3.4-3h-2.6z" fill="#fff"/><path d="M7.6 3.2q1.5 2.3 0 4.6 M9.2 1.6q2.8 3.9 0 7.8" stroke="#fff" stroke-width="1.1" fill="none" stroke-linecap="round"/></g>
<text x="956.5" y="635" font-size="12.8" fill="#fff" stroke="#fff" stroke-width=".28" >3.04</text>
<text x="992.5" y="635" font-size="12.8" fill="#fff" stroke="#fff" stroke-width=".28" >Clouds.mp4</text>
</g>
<clipPath id="cc7"><rect x="136.4" y="669.6" width="191.6" height="50" rx="3.5"/></clipPath>
<g clip-path="url(#cc7)">
<rect x="136.4" y="669.6" width="191.6" height="50" fill="#49a7f4"/>
<svg x="136.4" y="669.6" width="88" height="50" viewBox="0 0 118 66" preserveAspectRatio="xMidYMid slice" overflow="hidden"><svg width="118" height="66" viewBox="0 0 118 72" preserveAspectRatio="xMidYMid slice"><rect width="118" height="72" fill="#4b7fc3"/><polygon points="0,28.2 26.5,5.1 74.2,0.2 102.6,32.8 75.7,65.8 34.2,72.8 17.2,72.8" fill="#e6eaf6" opacity=".92"/><polygon points="15.7,46.6 38.8,43.5 37.2,72.8 18.8,72.8" fill="#c4c8f0" opacity=".8"/><ellipse cx="13.4" cy="34.3" rx="13.5" ry="14.2" fill="#4068c6" /><ellipse cx="14.9" cy="41.2" rx="10.8" ry="7.4" fill="#93a8ea" /><ellipse cx="47.2" cy="18.6" rx="25.4" ry="18.2" fill="#d8623a" transform="rotate(-14 47.2 18.6)"/><ellipse cx="48.8" cy="22.3" rx="24.3" ry="15.4" fill="#e2b9a8" transform="rotate(-14 48.8 22.3)"/><ellipse cx="80.3" cy="37.4" rx="17.8" ry="16.9" fill="#1e9a36" /><ellipse cx="76.5" cy="32.8" rx="7.7" ry="9.2" fill="#35c452" opacity=".55"/><ellipse cx="52.6" cy="56.2" rx="18.8" ry="17.2" fill="#a9b1aa" /><ellipse cx="58" cy="57.4" rx="14.6" ry="15.4" fill="#1b5a30" /><polygon points="69.5,3.5 80.3,1.7 95.7,17.1 117.2,20.5 117.2,33.1 98.8,28.5 80.3,16.2" fill="#3a2016" /></svg></svg>
<svg x="136.4" y="669.6" width="88" height="50" viewBox="136.4 669.6 88 50" overflow="hidden"><polygon points="136.4,719.6 136.4,709.6 137.9,710.4 139.4,708.1 140.9,709.2 142.4,709.1 143.9,709.9 145.4,711 146.9,706.6 148.4,709 149.9,706.5 151.4,706.4 152.9,707.4 154.4,702.5 155.9,702 157.4,702.4 158.9,707.8 160.4,707.3 161.9,705.5 163.4,706.9 164.9,710.4 166.4,713.3 167.9,710.1 169.4,710.2 170.9,706.6 172.4,710.1 173.9,708.5 175.4,708.2 176.9,706 178.4,708.3 179.9,708.2 181.4,711.8 182.9,710.3 184.4,711.1 185.9,707.7 187.4,710.2 188.9,709.8 190.4,709.3 191.9,709.6 193.4,705.5 194.9,703 196.4,706 197.9,707.8 199.4,707.7 200.9,704.9 202.4,708.4 203.9,709.8 205.4,712.2 206.9,712.5 208.4,713.4 209.9,711.2 211.4,711.3 212.9,714.2 214.4,713.7 215.9,710 217.4,710.6 218.9,713 220.4,715.4 221.9,712.6 223.4,714 224.9,713.4 226.4,714.4 227.9,713 229.4,712.7 230.9,713.5 232.4,711.8 233.9,707 235.4,706.9 236.9,708.7 238.4,703.2 239.9,699.5 241.4,700.1 242.9,700.5 244.4,700.2 245.9,699.9 247.4,698.3 248.9,698.6 250.4,699.4 251.9,699.7 253.4,696.8 254.9,693.2 256.4,692.1 257.9,692.1 259.4,692.1 260.9,692.1 262.4,692.1 263.9,693.8 265.4,693.4 266.9,700 268.4,698 269.9,696.2 271.4,696.1 272.9,698.3 274.4,700.7 275.9,699.4 277.4,694.1 278.9,693.6 280.4,693.7 281.9,697.2 283.4,698.4 284.9,696.9 286.4,694.8 287.9,697.7 289.4,700.8 290.9,701 292.4,698.6 293.9,696.2 295.4,696.2 296.9,695.6 298.4,696.6 299.9,696.9 301.4,695.1 302.9,697.2 304.4,700.4 305.9,704.9 307.4,702.8 308.9,703.4 310.4,705.3 311.9,706.2 313.4,709.9 314.9,708 316.4,704.5 317.9,705.1 319.4,706.1 320.9,708.3 322.4,705.5 323.9,705.1 325.4,706.8 326.9,708.7 328,709.5 328,719.6" fill="#cfe7fc" opacity=".6"/></svg>
<svg x="224.4" y="669.6" width="103.6" height="50" viewBox="224.4 669.6 103.6 50" overflow="hidden"><polygon points="136.4,719.6 136.4,709.6 137.9,710.4 139.4,708.1 140.9,709.2 142.4,709.1 143.9,709.9 145.4,711 146.9,706.6 148.4,709 149.9,706.5 151.4,706.4 152.9,707.4 154.4,702.5 155.9,702 157.4,702.4 158.9,707.8 160.4,707.3 161.9,705.5 163.4,706.9 164.9,710.4 166.4,713.3 167.9,710.1 169.4,710.2 170.9,706.6 172.4,710.1 173.9,708.5 175.4,708.2 176.9,706 178.4,708.3 179.9,708.2 181.4,711.8 182.9,710.3 184.4,711.1 185.9,707.7 187.4,710.2 188.9,709.8 190.4,709.3 191.9,709.6 193.4,705.5 194.9,703 196.4,706 197.9,707.8 199.4,707.7 200.9,704.9 202.4,708.4 203.9,709.8 205.4,712.2 206.9,712.5 208.4,713.4 209.9,711.2 211.4,711.3 212.9,714.2 214.4,713.7 215.9,710 217.4,710.6 218.9,713 220.4,715.4 221.9,712.6 223.4,714 224.9,713.4 226.4,714.4 227.9,713 229.4,712.7 230.9,713.5 232.4,711.8 233.9,707 235.4,706.9 236.9,708.7 238.4,703.2 239.9,699.5 241.4,700.1 242.9,700.5 244.4,700.2 245.9,699.9 247.4,698.3 248.9,698.6 250.4,699.4 251.9,699.7 253.4,696.8 254.9,693.2 256.4,692.1 257.9,692.1 259.4,692.1 260.9,692.1 262.4,692.1 263.9,693.8 265.4,693.4 266.9,700 268.4,698 269.9,696.2 271.4,696.1 272.9,698.3 274.4,700.7 275.9,699.4 277.4,694.1 278.9,693.6 280.4,693.7 281.9,697.2 283.4,698.4 284.9,696.9 286.4,694.8 287.9,697.7 289.4,700.8 290.9,701 292.4,698.6 293.9,696.2 295.4,696.2 296.9,695.6 298.4,696.6 299.9,696.9 301.4,695.1 302.9,697.2 304.4,700.4 305.9,704.9 307.4,702.8 308.9,703.4 310.4,705.3 311.9,706.2 313.4,709.9 314.9,708 316.4,704.5 317.9,705.1 319.4,706.1 320.9,708.3 322.4,705.5 323.9,705.1 325.4,706.8 326.9,708.7 328,709.5 328,719.6" fill="#a6d3f8"/></svg>
<rect x="136.4" y="690" width="191.6" height="1.3" fill="#fff" opacity=".92"/>
<g transform="translate(229 673.8) scale(1.18)"><path d="M0 3.5h2.6l3.4-3v10l-3.4-3h-2.6z" fill="#fff"/><path d="M7.6 3.2q1.5 2.3 0 4.6 M9.2 1.6q2.8 3.9 0 7.8" stroke="#fff" stroke-width="1.1" fill="none" stroke-linecap="round"/></g>
<text x="247" y="685.1" font-size="12.8" fill="#fff" stroke="#fff" stroke-width=".28" >2.27</text>
<text x="280.4" y="685.1" font-size="12.8" fill="#fff" stroke="#fff" stroke-width=".28" >Beach Balls.mp4</text>
</g>
<clipPath id="cc8"><rect x="331" y="669.6" width="321.6" height="50" rx="3.5"/></clipPath>
<g clip-path="url(#cc8)">
<rect x="331" y="669.6" width="321.6" height="50" fill="#49a7f4"/>
<svg x="331" y="669.6" width="88" height="50" viewBox="0 0 118 66" preserveAspectRatio="xMidYMid slice" overflow="hidden"><rect width="118" height="66" fill="#7fb2e4"/><rect y="50" width="118" height="16" fill="#c9d6e0"/><ellipse cx="36" cy="8" rx="11" ry="9" fill="#2a5fd0"/><ellipse cx="78" cy="18" rx="9" ry="10" fill="#1f9a3c"/><ellipse cx="40" cy="30" rx="8" ry="8" fill="#1a1311"/><ellipse cx="84" cy="40" rx="7" ry="7" fill="#1a1311"/><polygon points="26,40 54,40 56,66 24,66" fill="#eef0f2"/><polygon points="72,48 96,48 98,66 70,66" fill="#eef0f2"/><path d="M28 40 L28 8 M52 40 L46 10 M72 48 L70 20 M96 48 L88 22" stroke="#1a1311" stroke-width="3.5"/></svg>
<svg x="331" y="669.6" width="88" height="50" viewBox="331 669.6 88 50" overflow="hidden"><polygon points="331,719.6 331,694.1 332.5,698.2 334,697.9 335.5,697.4 337,697.9 338.5,700.7 340,707.2 341.5,708.7 343,705.3 344.5,703.5 346,704 347.5,702.6 349,702.2 350.5,700.9 352,701 353.5,699.8 355,702.8 356.5,700.9 358,704.1 359.5,699.3 361,696.7 362.5,694.7 364,694.7 365.5,692.1 367,689.6 368.5,690.4 370,691.2 371.5,689.7 373,689.7 374.5,694.4 376,691.6 377.5,691.7 379,695.5 380.5,697.8 382,696.2 383.5,695.1 385,692.6 386.5,692.4 388,696.9 389.5,697.4 391,698.8 392.5,698.6 394,700 395.5,700.4 397,702.6 398.5,703.5 400,702.4 401.5,698.9 403,698 404.5,699.5 406,698 407.5,697.8 409,698.4 410.5,696.9 412,702 413.5,704.8 415,705.8 416.5,705.5 418,705.4 419.5,704.6 421,710.2 422.5,708.8 424,707.5 425.5,709 427,709.4 428.5,714.3 430,713.4 431.5,714 433,713.4 434.5,712.2 436,714.5 437.5,713.7 439,711.5 440.5,713.8 442,713.3 443.5,709.4 445,712.4 446.5,715 448,712.4 449.5,713.2 451,712.8 452.5,711.1 454,711.9 455.5,711.7 457,708.4 458.5,705.8 460,706.3 461.5,709.4 463,707.6 464.5,707.3 466,708.4 467.5,709.9 469,711.4 470.5,713.1 472,712.8 473.5,708.8 475,706.9 476.5,709.8 478,710 479.5,706.5 481,703.5 482.5,702.8 484,705.4 485.5,708.6 487,706.4 488.5,704.5 490,702.4 491.5,700.7 493,699.6 494.5,701.4 496,697.8 497.5,697.6 499,697.1 500.5,696.1 502,700.7 503.5,702.9 505,706.2 506.5,705.4 508,705.6 509.5,710.1 511,710.2 512.5,708 514,704.4 515.5,704.3 517,707.2 518.5,709.5 520,710 521.5,708.5 523,706.9 524.5,712 526,709.5 527.5,710 529,710.8 530.5,706.1 532,703.4 533.5,703.4 535,703.9 536.5,702.8 538,698.5 539.5,698.8 541,702.2 542.5,702.1 544,703.1 545.5,703.8 547,698.8 548.5,698.1 550,700 551.5,702.2 553,698 554.5,695.1 556,694.8 557.5,697.1 559,703.6 560.5,701 562,703 563.5,699.6 565,698 566.5,697.6 568,696.4 569.5,690.5 571,689.6 572.5,689.6 574,689.6 575.5,689.8 577,691.6 578.5,689.6 580,689.6 581.5,690.9 583,689.6 584.5,691.6 586,690 587.5,689.6 589,689.6 590.5,689.6 592,690.5 593.5,691.2 595,692.2 596.5,692.3 598,699.4 599.5,703 601,701.7 602.5,701.2 604,701.1 605.5,699.5 607,698.9 608.5,701.3 610,701.1 611.5,700.3 613,699.7 614.5,704 616,706.6 617.5,707.8 619,703.7 620.5,701.3 622,702.8 623.5,703.4 625,704.4 626.5,699.4 628,700.9 629.5,699.8 631,707.4 632.5,708 634,708.3 635.5,709.5 637,711.6 638.5,713.3 640,710.9 641.5,710.6 643,712.1 644.5,709.6 646,708.1 647.5,709.6 649,714 650.5,711.4 652,711.7 652.6,712.2 652.6,719.6" fill="#cfe7fc" opacity=".6"/></svg>
<svg x="419" y="669.6" width="233.6" height="50" viewBox="419 669.6 233.6 50" overflow="hidden"><polygon points="331,719.6 331,694.1 332.5,698.2 334,697.9 335.5,697.4 337,697.9 338.5,700.7 340,707.2 341.5,708.7 343,705.3 344.5,703.5 346,704 347.5,702.6 349,702.2 350.5,700.9 352,701 353.5,699.8 355,702.8 356.5,700.9 358,704.1 359.5,699.3 361,696.7 362.5,694.7 364,694.7 365.5,692.1 367,689.6 368.5,690.4 370,691.2 371.5,689.7 373,689.7 374.5,694.4 376,691.6 377.5,691.7 379,695.5 380.5,697.8 382,696.2 383.5,695.1 385,692.6 386.5,692.4 388,696.9 389.5,697.4 391,698.8 392.5,698.6 394,700 395.5,700.4 397,702.6 398.5,703.5 400,702.4 401.5,698.9 403,698 404.5,699.5 406,698 407.5,697.8 409,698.4 410.5,696.9 412,702 413.5,704.8 415,705.8 416.5,705.5 418,705.4 419.5,704.6 421,710.2 422.5,708.8 424,707.5 425.5,709 427,709.4 428.5,714.3 430,713.4 431.5,714 433,713.4 434.5,712.2 436,714.5 437.5,713.7 439,711.5 440.5,713.8 442,713.3 443.5,709.4 445,712.4 446.5,715 448,712.4 449.5,713.2 451,712.8 452.5,711.1 454,711.9 455.5,711.7 457,708.4 458.5,705.8 460,706.3 461.5,709.4 463,707.6 464.5,707.3 466,708.4 467.5,709.9 469,711.4 470.5,713.1 472,712.8 473.5,708.8 475,706.9 476.5,709.8 478,710 479.5,706.5 481,703.5 482.5,702.8 484,705.4 485.5,708.6 487,706.4 488.5,704.5 490,702.4 491.5,700.7 493,699.6 494.5,701.4 496,697.8 497.5,697.6 499,697.1 500.5,696.1 502,700.7 503.5,702.9 505,706.2 506.5,705.4 508,705.6 509.5,710.1 511,710.2 512.5,708 514,704.4 515.5,704.3 517,707.2 518.5,709.5 520,710 521.5,708.5 523,706.9 524.5,712 526,709.5 527.5,710 529,710.8 530.5,706.1 532,703.4 533.5,703.4 535,703.9 536.5,702.8 538,698.5 539.5,698.8 541,702.2 542.5,702.1 544,703.1 545.5,703.8 547,698.8 548.5,698.1 550,700 551.5,702.2 553,698 554.5,695.1 556,694.8 557.5,697.1 559,703.6 560.5,701 562,703 563.5,699.6 565,698 566.5,697.6 568,696.4 569.5,690.5 571,689.6 572.5,689.6 574,689.6 575.5,689.8 577,691.6 578.5,689.6 580,689.6 581.5,690.9 583,689.6 584.5,691.6 586,690 587.5,689.6 589,689.6 590.5,689.6 592,690.5 593.5,691.2 595,692.2 596.5,692.3 598,699.4 599.5,703 601,701.7 602.5,701.2 604,701.1 605.5,699.5 607,698.9 608.5,701.3 610,701.1 611.5,700.3 613,699.7 614.5,704 616,706.6 617.5,707.8 619,703.7 620.5,701.3 622,702.8 623.5,703.4 625,704.4 626.5,699.4 628,700.9 629.5,699.8 631,707.4 632.5,708 634,708.3 635.5,709.5 637,711.6 638.5,713.3 640,710.9 641.5,710.6 643,712.1 644.5,709.6 646,708.1 647.5,709.6 649,714 650.5,711.4 652,711.7 652.6,712.2 652.6,719.6" fill="#a6d3f8"/></svg>
<rect x="331" y="690" width="321.6" height="1.3" fill="#fff" opacity=".92"/>
<g transform="translate(423.4 673.8) scale(1.18)"><path d="M0 3.5h2.6l3.4-3v10l-3.4-3h-2.6z" fill="#fff"/><path d="M7.6 3.2q1.5 2.3 0 4.6 M9.2 1.6q2.8 3.9 0 7.8" stroke="#fff" stroke-width="1.1" fill="none" stroke-linecap="round"/></g>
<text x="440.5" y="685.1" font-size="12.8" fill="#fff" stroke="#fff" stroke-width=".28" >4.25</text>
<text x="475.7" y="685.1" font-size="12.8" fill="#fff" stroke="#fff" stroke-width=".28" >Siblings.mp4</text>
</g>
<clipPath id="cc9"><rect x="655.6" y="669.6" width="308" height="50" rx="3.5"/></clipPath>
<g clip-path="url(#cc9)">
<rect x="655.6" y="669.6" width="308" height="50" fill="#49a7f4"/>
<svg x="655.6" y="669.6" width="88.4" height="50" viewBox="0 0 118 66" preserveAspectRatio="xMidYMid slice" overflow="hidden"><rect width="118" height="66" fill="#dfe5ea"/><ellipse cx="30" cy="10" rx="40" ry="8" fill="#f6f6f6"/><ellipse cx="80" cy="22" rx="44" ry="7" fill="#c3cdd8"/><rect y="46" width="118" height="20" fill="#c9d1d8"/><polygon points="60,62 118,44 118,66 60,66" fill="#5a5e64"/><ellipse cx="78" cy="26" rx="5" ry="5" fill="#1a1412"/><polygon points="74,30 84,30 86,52 74,52" fill="#e6dcc8"/><ellipse cx="92" cy="28" rx="7" ry="8" fill="#f1ede6"/><ellipse cx="52" cy="38" rx="4" ry="4" fill="#1a1412"/><polygon points="49,42 56,42 57,60 49,60" fill="#2a9a98"/></svg>
<svg x="655.6" y="669.6" width="88.4" height="50" viewBox="655.6 669.6 88.4 50" overflow="hidden"><polygon points="655.6,719.6 655.6,714.2 657.1,714.4 658.6,715.1 660.1,714.2 661.6,714.3 663.1,713.3 664.6,714.7 666.1,715.2 667.6,714.7 669.1,713.2 670.6,713 672.1,712.2 673.6,712.4 675.1,713.9 676.6,715.1 678.1,711.3 679.6,710.4 681.1,711.7 682.6,709.8 684.1,708.3 685.6,702 687.1,700 688.6,700.8 690.1,701.7 691.6,704.8 693.1,702.5 694.6,701.2 696.1,702.2 697.6,705.7 699.1,706.9 700.6,702.8 702.1,701.9 703.6,698.5 705.1,702.6 706.6,702.4 708.1,702.4 709.6,703 711.1,702.1 712.6,704.6 714.1,707.7 715.6,706.1 717.1,704.1 718.6,701.4 720.1,702.8 721.6,703.9 723.1,702.1 724.6,700.9 726.1,696.2 727.6,697.7 729.1,700.6 730.6,702.5 732.1,702.3 733.6,699.2 735.1,698.5 736.6,699.3 738.1,698.7 739.6,700.5 741.1,697.3 742.6,693.1 744.1,693.5 745.6,699.4 747.1,702.8 748.6,702.3 750.1,701.6 751.6,704.9 753.1,705.5 754.6,708.1 756.1,708.6 757.6,705.9 759.1,703.4 760.6,702.9 762.1,706.2 763.6,705.5 765.1,704.2 766.6,704.1 768.1,707 769.6,706.8 771.1,707.9 772.6,709 774.1,704.2 775.6,700 777.1,697.9 778.6,698 780.1,698.5 781.6,696 783.1,692.8 784.6,696.7 786.1,698.5 787.6,702.3 789.1,698.9 790.6,697.2 792.1,697.8 793.6,698.6 795.1,698.3 796.6,696.7 798.1,697 799.6,695.5 801.1,697.2 802.6,702.2 804.1,702.6 805.6,703.8 807.1,702.6 808.6,704.6 810.1,706.2 811.6,708.7 813.1,706.5 814.6,704.1 816.1,702.4 817.6,705.2 819.1,704.4 820.6,708.1 822.1,706.4 823.6,704.2 825.1,707 826.6,707.6 828.1,710.6 829.6,708.1 831.1,705.7 832.6,704.5 834.1,705.3 835.6,706.5 837.1,705.3 838.6,704.3 840.1,708.3 841.6,708.9 843.1,712.3 844.6,713.9 846.1,715.1 847.6,713.2 849.1,713.5 850.6,714.1 852.1,713.2 853.6,714.1 855.1,714.1 856.6,714.4 858.1,711.7 859.6,714 861.1,711.7 862.6,714.8 864.1,712.9 865.6,713.3 867.1,712.7 868.6,713.5 870.1,712.1 871.6,711.3 873.1,712.2 874.6,710.4 876.1,711.5 877.6,712.5 879.1,709.2 880.6,707.7 882.1,710.3 883.6,711.3 885.1,709.6 886.6,705.1 888.1,702.1 889.6,702.2 891.1,701.7 892.6,702.2 894.1,701.5 895.6,701.2 897.1,700.1 898.6,703.1 900.1,706.8 901.6,706.1 903.1,701.3 904.6,701.4 906.1,699.8 907.6,700.9 909.1,699.3 910.6,696.2 912.1,696.7 913.6,696.8 915.1,699.9 916.6,701.5 918.1,699.2 919.6,696.4 921.1,692.3 922.6,693.7 924.1,693.3 925.6,693.9 927.1,693.2 928.6,692.8 930.1,693.1 931.6,692.1 933.1,692.4 934.6,693.5 936.1,692.1 937.6,693.4 939.1,695.3 940.6,695.6 942.1,697 943.6,692.1 945.1,692.3 946.6,695.6 948.1,696.9 949.6,698.4 951.1,700.1 952.6,700.5 954.1,702.5 955.6,708.4 957.1,709.5 958.6,707.9 960.1,707 961.6,703.5 963.1,706.2 963.6,708.1 963.6,719.6" fill="#cfe7fc" opacity=".6"/></svg>
<svg x="744" y="669.6" width="219.6" height="50" viewBox="744 669.6 219.6 50" overflow="hidden"><polygon points="655.6,719.6 655.6,714.2 657.1,714.4 658.6,715.1 660.1,714.2 661.6,714.3 663.1,713.3 664.6,714.7 666.1,715.2 667.6,714.7 669.1,713.2 670.6,713 672.1,712.2 673.6,712.4 675.1,713.9 676.6,715.1 678.1,711.3 679.6,710.4 681.1,711.7 682.6,709.8 684.1,708.3 685.6,702 687.1,700 688.6,700.8 690.1,701.7 691.6,704.8 693.1,702.5 694.6,701.2 696.1,702.2 697.6,705.7 699.1,706.9 700.6,702.8 702.1,701.9 703.6,698.5 705.1,702.6 706.6,702.4 708.1,702.4 709.6,703 711.1,702.1 712.6,704.6 714.1,707.7 715.6,706.1 717.1,704.1 718.6,701.4 720.1,702.8 721.6,703.9 723.1,702.1 724.6,700.9 726.1,696.2 727.6,697.7 729.1,700.6 730.6,702.5 732.1,702.3 733.6,699.2 735.1,698.5 736.6,699.3 738.1,698.7 739.6,700.5 741.1,697.3 742.6,693.1 744.1,693.5 745.6,699.4 747.1,702.8 748.6,702.3 750.1,701.6 751.6,704.9 753.1,705.5 754.6,708.1 756.1,708.6 757.6,705.9 759.1,703.4 760.6,702.9 762.1,706.2 763.6,705.5 765.1,704.2 766.6,704.1 768.1,707 769.6,706.8 771.1,707.9 772.6,709 774.1,704.2 775.6,700 777.1,697.9 778.6,698 780.1,698.5 781.6,696 783.1,692.8 784.6,696.7 786.1,698.5 787.6,702.3 789.1,698.9 790.6,697.2 792.1,697.8 793.6,698.6 795.1,698.3 796.6,696.7 798.1,697 799.6,695.5 801.1,697.2 802.6,702.2 804.1,702.6 805.6,703.8 807.1,702.6 808.6,704.6 810.1,706.2 811.6,708.7 813.1,706.5 814.6,704.1 816.1,702.4 817.6,705.2 819.1,704.4 820.6,708.1 822.1,706.4 823.6,704.2 825.1,707 826.6,707.6 828.1,710.6 829.6,708.1 831.1,705.7 832.6,704.5 834.1,705.3 835.6,706.5 837.1,705.3 838.6,704.3 840.1,708.3 841.6,708.9 843.1,712.3 844.6,713.9 846.1,715.1 847.6,713.2 849.1,713.5 850.6,714.1 852.1,713.2 853.6,714.1 855.1,714.1 856.6,714.4 858.1,711.7 859.6,714 861.1,711.7 862.6,714.8 864.1,712.9 865.6,713.3 867.1,712.7 868.6,713.5 870.1,712.1 871.6,711.3 873.1,712.2 874.6,710.4 876.1,711.5 877.6,712.5 879.1,709.2 880.6,707.7 882.1,710.3 883.6,711.3 885.1,709.6 886.6,705.1 888.1,702.1 889.6,702.2 891.1,701.7 892.6,702.2 894.1,701.5 895.6,701.2 897.1,700.1 898.6,703.1 900.1,706.8 901.6,706.1 903.1,701.3 904.6,701.4 906.1,699.8 907.6,700.9 909.1,699.3 910.6,696.2 912.1,696.7 913.6,696.8 915.1,699.9 916.6,701.5 918.1,699.2 919.6,696.4 921.1,692.3 922.6,693.7 924.1,693.3 925.6,693.9 927.1,693.2 928.6,692.8 930.1,693.1 931.6,692.1 933.1,692.4 934.6,693.5 936.1,692.1 937.6,693.4 939.1,695.3 940.6,695.6 942.1,697 943.6,692.1 945.1,692.3 946.6,695.6 948.1,696.9 949.6,698.4 951.1,700.1 952.6,700.5 954.1,702.5 955.6,708.4 957.1,709.5 958.6,707.9 960.1,707 961.6,703.5 963.1,706.2 963.6,708.1 963.6,719.6" fill="#a6d3f8"/></svg>
<rect x="655.6" y="690" width="308" height="1.3" fill="#fff" opacity=".92"/>
<g transform="translate(748 673.8) scale(1.18)"><path d="M0 3.5h2.6l3.4-3v10l-3.4-3h-2.6z" fill="#fff"/><path d="M7.6 3.2q1.5 2.3 0 4.6 M9.2 1.6q2.8 3.9 0 7.8" stroke="#fff" stroke-width="1.1" fill="none" stroke-linecap="round"/></g>
<text x="765.7" y="685.1" font-size="12.8" fill="#fff" stroke="#fff" stroke-width=".28" >4.19</text>
<text x="800" y="685.1" font-size="12.8" fill="#fff" stroke="#fff" stroke-width=".28" >Dock.mp4</text>
</g>
<clipPath id="cc10"><rect x="136.4" y="728" width="445.2" height="37.6" rx="3.5"/></clipPath>
<g clip-path="url(#cc10)">
<rect x="136.4" y="728" width="445.2" height="37.6" fill="#5b9b46"/>
<polygon points="136.4,765.6 136.4,756.8 137.9,757.6 139.4,759.1 140.9,761.2 142.4,758.2 143.9,757.6 145.4,756 146.9,756.2 148.4,753.5 149.9,753.1 151.4,750.9 152.9,750.7 154.4,753.1 155.9,753.7 157.4,753.3 158.9,752.3 160.4,747.3 161.9,747.3 163.4,747.9 164.9,746.8 166.4,747.8 167.9,746.8 169.4,746.9 170.9,748.3 172.4,751.7 173.9,752.5 175.4,752.4 176.9,751.3 178.4,748.8 179.9,751.3 181.4,750.3 182.9,751.1 184.4,748.1 185.9,748.7 187.4,751.3 188.9,753.5 190.4,754.4 191.9,752.6 193.4,752.4 194.9,751 196.4,750.5 197.9,752.2 199.4,749.3 200.9,748.6 202.4,750.9 203.9,754 205.4,756.6 206.9,758 208.4,756.1 209.9,757.4 211.4,759.2 212.9,760.4 214.4,759.4 215.9,758.5 217.4,759.7 218.9,760.9 220.4,762.1 221.9,761.6 223.4,762.9 224.9,761.9 226.4,762.1 227.9,761.9 229.4,763.1 230.9,763.1 232.4,762.2 233.9,759.6 235.4,761.2 236.9,761.5 238.4,762.7 239.9,763.1 241.4,762.1 242.9,759 244.4,758.9 245.9,759.9 247.4,758.2 248.9,756.4 250.4,754.8 251.9,755.5 253.4,759.1 254.9,759.1 256.4,759.3 257.9,759.6 259.4,758.6 260.9,760 262.4,760.6 263.9,760.1 265.4,756.7 266.9,757.4 268.4,758.4 269.9,758.2 271.4,759.2 272.9,759.4 274.4,757.2 275.9,758.6 277.4,758.1 278.9,757.7 280.4,755.7 281.9,754 283.4,753.1 284.9,753.5 286.4,754.3 287.9,755.6 289.4,756.3 290.9,756.7 292.4,757.8 293.9,757.1 295.4,758.9 296.9,757.6 298.4,758.2 299.9,757.5 301.4,757.5 302.9,759.7 304.4,760.5 305.9,761.1 307.4,761.2 308.9,760.8 310.4,760.4 311.9,761.4 313.4,759 314.9,757 316.4,754.1 317.9,756.4 319.4,755.6 320.9,754.8 322.4,755.8 323.9,752.9 325.4,752.5 326.9,752.1 328.4,751.8 329.9,750 331.4,747 332.9,746.8 334.4,746.8 335.9,749.8 337.4,750.7 338.9,750.3 340.4,750.5 341.9,750.5 343.4,752.6 344.9,750.3 346.4,748.7 347.9,747.8 349.4,746.8 350.9,748 352.4,749.1 353.9,750 355.4,749.3 356.9,749 358.4,749.4 359.9,749.3 361.4,748.8 362.9,748 364.4,746.8 365.9,746.8 367.4,746.8 368.9,746.8 370.4,749.3 371.9,748.4 373.4,750.7 374.9,751.3 376.4,755 377.9,754 379.4,754.1 380.9,752.1 382.4,754.1 383.9,757.2 385.4,758.3 386.9,759.3 388.4,758.1 389.9,760.7 391.4,761.6 392.9,762.1 394.4,760.7 395.9,761.4 397.4,758.4 398.9,758.3 400.4,758.4 401.9,758.1 403.4,759.2 404.9,757.5 406.4,758.2 407.9,759.2 409.4,761 410.9,757.9 412.4,755.2 413.9,755.1 415.4,755.3 416.9,754.8 418.4,757.8 419.9,757.8 421.4,758 422.9,757.4 424.4,759.4 425.9,761.2 427.4,760.1 428.9,760.1 430.4,757.3 431.9,758.1 433.4,758.7 434.9,759.2 436.4,758.5 437.9,758.7 439.4,760 440.9,760.3 442.4,761.2 443.9,758.7 445.4,756.1 446.9,754.9 448.4,755.7 449.9,757 451.4,756.7 452.9,755.9 454.4,755.9 455.9,756.9 457.4,761.4 458.9,761.4 460.4,761 461.9,759.5 463.4,758.8 464.9,760 466.4,761.4 467.9,761.3 469.4,761.4 470.9,761.2 472.4,761.7 473.9,761.7 475.4,762.9 476.9,761.1 478.4,762.5 479.9,761.7 481.4,761 482.9,760.3 484.4,759.3 485.9,760.4 487.4,759 488.9,759.8 490.4,760.5 491.9,760.8 493.4,757.8 494.9,756.6 496.4,754.8 497.9,753 499.4,753.3 500.9,752.8 502.4,752.5 503.9,750.6 505.4,753.4 506.9,756.7 508.4,756.6 509.9,754.3 511.4,752.4 512.9,752.9 514.4,751.2 515.9,752.4 517.4,750.9 518.9,747.7 520.4,749.7 521.9,750.1 523.4,752.8 524.9,751.2 526.4,749.8 527.9,747.3 529.4,746.8 530.9,746.9 532.4,747 533.9,746.8 535.4,747.4 536.9,747.7 538.4,747.2 539.9,750.2 541.4,751.2 542.9,748.6 544.4,750.7 545.9,749.7 547.4,750.9 548.9,751.9 550.4,753 551.9,751.7 553.4,754.8 554.9,756.3 556.4,758.1 557.9,759.6 559.4,759.3 560.9,757.2 562.4,758.4 563.9,757.9 565.4,756.4 566.9,753.1 568.4,753 569.9,754.2 571.4,754.3 572.9,755.3 574.4,755.4 575.9,755.1 577.4,753.9 578.9,753.5 580.4,753.2 581.6,753.2 581.6,765.6" fill="#9dcd86"/>
<rect x="136.4" y="742.8" width="445.2" height="1.3" fill="#c4e6b0"/>
<text x="149.4" y="741.8" font-size="12" fill="#13200d" textLength="91.6" lengthAdjust="spacingAndGlyphs" >6.20  Voiceover</text>
</g>
<clipPath id="cc11"><rect x="722" y="728" width="215.4" height="37.6" rx="3.5"/></clipPath>
<g clip-path="url(#cc11)">
<rect x="722" y="728" width="215.4" height="37.6" fill="#5b9b46"/>
<polygon points="722,765.6 722,751.8 723.5,751.6 725,750.7 726.5,750 728,750 729.5,748.5 731,749.3 732.5,752.5 734,751.5 735.5,751.5 737,749.9 738.5,748.3 740,747.1 741.5,750.3 743,751.7 744.5,753.2 746,752.9 747.5,754.6 749,755.6 750.5,756.6 752,756.7 753.5,753.1 755,753.9 756.5,753.9 758,755.9 759.5,758.1 761,759.1 762.5,755.9 764,755.3 765.5,756.4 767,756.3 768.5,753.7 770,753.2 771.5,750.4 773,753.2 774.5,755.3 776,756.4 777.5,754.4 779,751.6 780.5,752.1 782,752.4 783.5,752.6 785,753.3 786.5,752.2 788,753.1 789.5,755.4 791,756.5 792.5,756.8 794,755.8 795.5,750.9 797,751.8 798.5,752.4 800,753.5 801.5,752 803,750.9 804.5,751.6 806,752.2 807.5,752.8 809,748.7 810.5,747.7 812,746.8 813.5,747.2 815,747.3 816.5,747.2 818,747.6 819.5,748 821,746.8 822.5,746.8 824,746.8 825.5,747.6 827,746.8 828.5,748 830,747 831.5,748.2 833,750.5 834.5,752 836,750.1 837.5,750.8 839,751.8 840.5,752.7 842,751.8 843.5,752.2 845,753.7 846.5,755.3 848,757.7 849.5,759 851,756.4 852.5,754.1 854,753.6 855.5,753.3 857,756.7 858.5,755.6 860,754.9 861.5,756.1 863,757.9 864.5,757.7 866,757.9 867.5,756.4 869,755.2 870.5,753 872,756.7 873.5,759.3 875,759.9 876.5,759.8 878,758.4 879.5,761 881,761.3 882.5,761.1 884,758.5 885.5,758.2 887,758.7 888.5,759.5 890,760.1 891.5,760 893,760.7 894.5,758.5 896,756.7 897.5,758.3 899,756.4 900.5,753.7 902,753.2 903.5,753.4 905,755.4 906.5,756.7 908,755.9 909.5,753.6 911,752.3 912.5,753.3 914,752.8 915.5,754.5 917,752.8 918.5,754.5 920,758.4 921.5,759.5 923,759.8 924.5,760.4 926,757.9 927.5,759.2 929,758.9 930.5,762.5 932,761.6 933.5,760.7 935,761.3 936.5,762.9 937.4,762.1 937.4,765.6" fill="#9dcd86"/>
<rect x="722" y="742.8" width="215.4" height="1.3" fill="#c4e6b0"/>
<text x="735.7" y="741.8" font-size="12" fill="#13200d" textLength="103.6" lengthAdjust="spacingAndGlyphs" >3.07  Voiceover-2</text>
</g>
<clipPath id="cc12"><rect x="563.6" y="774" width="294.9" height="38" rx="3.5"/></clipPath>
<g clip-path="url(#cc12)">
<rect x="563.6" y="774" width="294.9" height="38" fill="#5b9b46"/>
<polygon points="563.6,812 563.6,807.6 565.1,806.2 566.6,805.2 568.1,803 569.6,801.1 571.1,803.1 572.6,803.3 574.1,801.4 575.6,800.5 577.1,800.8 578.6,799.2 580.1,799 581.6,796.1 583.1,793.4 584.6,793 586.1,794.9 587.6,794.8 589.1,795.5 590.6,794.6 592.1,795.8 593.6,799.4 595.1,801.4 596.6,799.6 598.1,797.3 599.6,797.3 601.1,798.7 602.6,798.5 604.1,798.4 605.6,797 607.1,797.3 608.6,798.3 610.1,801.7 611.6,801.7 613.1,800.7 614.6,801 616.1,801.4 617.6,800.6 619.1,797.9 620.6,796.4 622.1,795.4 623.6,796.6 625.1,797.5 626.6,795.8 628.1,795.7 629.6,797.5 631.1,800.4 632.6,800.3 634.1,800.1 635.6,798.3 637.1,799.5 638.6,799.7 640.1,799.3 641.6,799.2 643.1,796.9 644.6,799.4 646.1,799.7 647.6,804.2 649.1,803.5 650.6,804 652.1,802.1 653.6,803.6 655.1,803.2 656.6,802 658.1,798.9 659.6,798.4 661.1,797.4 662.6,798.4 664.1,798.3 665.6,794.9 667.1,796.3 668.6,798.4 670.1,799.9 671.6,797.8 673.1,796.1 674.6,793 676.1,793 677.6,794.7 679.1,794.1 680.6,793 682.1,793.9 683.6,793 685.1,793.8 686.6,796.3 688.1,795.7 689.6,795.4 691.1,799 692.6,801.1 694.1,799.3 695.6,798 697.1,797.2 698.6,799.2 700.1,801.6 701.6,801.2 703.1,800.5 704.6,801.8 706.1,805.2 707.6,807.1 709.1,807.1 710.6,805.2 712.1,805.2 713.6,805.7 715.1,805.4 716.6,806.4 718.1,803.2 719.6,803.3 721.1,803.9 722.6,804.9 724.1,807.1 725.6,804.8 727.1,807.4 728.6,807.4 730.1,808.4 731.6,809.1 733.1,807.1 734.6,806.5 736.1,807.1 737.6,807.4 739.1,809.4 740.6,807.9 742.1,807.1 743.6,809.5 745.1,807.6 746.6,809.4 748.1,808.1 749.6,809.4 751.1,808.7 752.6,808.8 754.1,809.7 755.6,807.6 757.1,807 758.6,806.6 760.1,807.8 761.6,807.7 763.1,806.7 764.6,806.6 766.1,805.5 767.6,808.2 769.1,805.3 770.6,802.9 772.1,801.5 773.6,800.2 775.1,800.8 776.6,800.3 778.1,799.5 779.6,798.8 781.1,800.4 782.6,802.9 784.1,802.2 785.6,803.3 787.1,802.6 788.6,803.4 790.1,803.5 791.6,804.2 793.1,802.4 794.6,802.2 796.1,803.1 797.6,805.6 799.1,806.3 800.6,806 802.1,804.4 803.6,806.6 805.1,809 806.6,808.2 808.1,807.8 809.6,804.9 811.1,804.8 812.6,804.1 814.1,805.2 815.6,802 817.1,802.4 818.6,801.3 820.1,804.1 821.6,806.4 823.1,803.6 824.6,804 826.1,803.9 827.6,805.2 829.1,803 830.6,802.9 832.1,799.3 833.6,800.4 835.1,801.3 836.6,803.3 838.1,803.5 839.6,801 841.1,803 842.6,806.2 844.1,804.5 845.6,803.4 847.1,803.4 848.6,803.1 850.1,801.8 851.6,802.5 853.1,798.8 854.6,797.6 856.1,797.1 857.6,799.1 858.5,799.1 858.5,812" fill="#9dcd86"/>
<rect x="563.6" y="788.8" width="294.9" height="1.3" fill="#c4e6b0"/>
<text x="576.6" y="787.8" font-size="12" fill="#13200d" textLength="103" lengthAdjust="spacingAndGlyphs" >4.13  Voiceover-3</text>
</g>
<rect x="1182.7" y="570.7" width="78.6" height="40.6" rx="3.5" fill="none" stroke="#46627f" stroke-width="1.3" stroke-dasharray="4 3"/>
<g stroke="#46627f" fill="none" stroke-width="1.1" stroke-linecap="round" stroke-linejoin="round"><rect x="1211" y="582" width="16" height="13" rx="1"/><path d="M1214 582v13 M1224 582v13"/><path d="M1216 595v3.5h16v-11.5h-3.5"/><path d="M1219 597h1 M1223 597h1 M1227 597h1"/></g>
<rect x="1073.2" y="620.2" width="78.7" height="41.1" rx="3.5" fill="none" stroke="#46627f" stroke-width="1.3" stroke-dasharray="4 3"/>
<g stroke="#46627f" fill="none" stroke-width="1.1" stroke-linecap="round" stroke-linejoin="round"><rect x="1101.5" y="631.8" width="16" height="13" rx="1"/><path d="M1104.5 631.8v13 M1114.5 631.8v13"/><path d="M1106.5 644.8v3.5h16v-11.5h-3.5"/><path d="M1109.5 646.8h1 M1113.5 646.8h1 M1117.5 646.8h1"/></g>
<rect x="966.7" y="670.3" width="79.6" height="48.6" rx="3.5" fill="none" stroke="#4a6c8f" stroke-width="1.3" stroke-dasharray="4 3"/>
<g stroke="#4a6c8f" fill="none" stroke-width="1.1" stroke-linecap="round" stroke-linejoin="round"><rect x="994.5" y="686.1" width="24" height="17" rx="1"/><path d="M998.5 686.1v17 M1014.5 686.1v17"/><path d="M995.8 689.1h1.4 M1015.8 689.1h1.4"/><path d="M995.8 692.8h1.4 M1015.8 692.8h1.4"/><path d="M995.8 696.5h1.4 M1015.8 696.5h1.4"/><path d="M995.8 700.2h1.4 M1015.8 700.2h1.4"/></g>
<rect x="940.7" y="728.7" width="78.6" height="36.2" rx="3.5" fill="none" stroke="#55693f" stroke-width="1.3" stroke-dasharray="4 3"/>
<g stroke="#55693f" fill="none" stroke-width="1.1" stroke-linecap="round" stroke-linejoin="round"><path d="M972 744.8v4"/><path d="M974 742.8v8"/><path d="M976 739.8v14"/><path d="M978 741.8v10"/><path d="M980 738.8v16"/><path d="M982 742.8v8"/><path d="M984 740.8v12"/><path d="M986 743.8v6"/><path d="M988 745.3v3"/></g>
<rect x="862.7" y="774.7" width="78.2" height="36.6" rx="3.5" fill="none" stroke="#55693f" stroke-width="1.3" stroke-dasharray="4 3"/>
<g stroke="#55693f" fill="none" stroke-width="1.1" stroke-linecap="round" stroke-linejoin="round"><path d="M893.8 791v4"/><path d="M895.8 789v8"/><path d="M897.8 786v14"/><path d="M899.8 788v10"/><path d="M901.8 785v16"/><path d="M903.8 789v8"/><path d="M905.8 787v12"/><path d="M907.8 790v6"/><path d="M909.8 791.5v3"/></g>
<path d="M137.1 556.5v.5q0 3.5 3.5 3.5h71.5q3.5 0 3.5-3.5v-.5" fill="none" stroke="#46627f" stroke-width="1.3" stroke-dasharray="4 3"/>
<path d="M137.1 824v-.500q0-3.5 3.5-3.5h71.5q3.5 0 3.5 3.5v.500" fill="none" stroke="#55693f" stroke-width="1.3" stroke-dasharray="4 3"/>
<rect x="133.7" y="844.6" width="1.4" height="2.9" fill="#e8e8e8"/>
<text x="134.4" y="839" font-size="10.5" fill="#d4d4d4" text-anchor="middle" >0.00</text>
<rect x="167.3" y="844.6" width="1.4" height="2.9" fill="#e8e8e8"/>
<rect x="200.9" y="844.6" width="1.4" height="2.9" fill="#e8e8e8"/>
<rect x="234.5" y="844.6" width="1.4" height="2.9" fill="#e8e8e8"/>
<rect x="268.1" y="844.6" width="1.4" height="2.9" fill="#e8e8e8"/>
<text x="268.8" y="839" font-size="10.5" fill="#d4d4d4" text-anchor="middle" >2.00</text>
<rect x="301.7" y="844.6" width="1.4" height="2.9" fill="#e8e8e8"/>
<rect x="335.3" y="844.6" width="1.4" height="2.9" fill="#e8e8e8"/>
<rect x="368.9" y="844.6" width="1.4" height="2.9" fill="#e8e8e8"/>
<rect x="402.5" y="844.6" width="1.4" height="2.9" fill="#e8e8e8"/>
<text x="403.2" y="839" font-size="10.5" fill="#d4d4d4" text-anchor="middle" >4.00</text>
<rect x="436.1" y="844.6" width="1.4" height="2.9" fill="#e8e8e8"/>
<rect x="469.7" y="844.6" width="1.4" height="2.9" fill="#e8e8e8"/>
<rect x="503.3" y="844.6" width="1.4" height="2.9" fill="#e8e8e8"/>
<rect x="536.9" y="844.6" width="1.4" height="2.9" fill="#e8e8e8"/>
<text x="537.6" y="839" font-size="10.5" fill="#d4d4d4" text-anchor="middle" >6.00</text>
<rect x="570.5" y="844.6" width="1.4" height="2.9" fill="#e8e8e8"/>
<rect x="604.1" y="844.6" width="1.4" height="2.9" fill="#e8e8e8"/>
<rect x="637.7" y="844.6" width="1.4" height="2.9" fill="#e8e8e8"/>
<rect x="671.3" y="844.6" width="1.4" height="2.9" fill="#e8e8e8"/>
<text x="672" y="839" font-size="10.5" fill="#d4d4d4" text-anchor="middle" >8.00</text>
<rect x="704.9" y="844.6" width="1.4" height="2.9" fill="#e8e8e8"/>
<rect x="738.5" y="844.6" width="1.4" height="2.9" fill="#e8e8e8"/>
<rect x="772.1" y="844.6" width="1.4" height="2.9" fill="#e8e8e8"/>
<rect x="805.7" y="844.6" width="1.4" height="2.9" fill="#e8e8e8"/>
<text x="806.4" y="839" font-size="10.5" fill="#d4d4d4" text-anchor="middle" >10.00</text>
<rect x="839.3" y="844.6" width="1.4" height="2.9" fill="#e8e8e8"/>
<rect x="872.9" y="844.6" width="1.4" height="2.9" fill="#e8e8e8"/>
<rect x="906.5" y="844.6" width="1.4" height="2.9" fill="#e8e8e8"/>
<rect x="940.1" y="844.6" width="1.4" height="2.9" fill="#e8e8e8"/>
<text x="940.8" y="839" font-size="10.5" fill="#d4d4d4" text-anchor="middle" >12.00</text>
<rect x="973.7" y="844.6" width="1.4" height="2.9" fill="#e8e8e8"/>
<rect x="1007.3" y="844.6" width="1.4" height="2.9" fill="#e8e8e8"/>
<rect x="1040.9" y="844.6" width="1.4" height="2.9" fill="#e8e8e8"/>
<rect x="1074.5" y="844.6" width="1.4" height="2.9" fill="#e8e8e8"/>
<text x="1075.2" y="839" font-size="10.5" fill="#d4d4d4" text-anchor="middle" >14.00</text>
<rect x="1108.1" y="844.6" width="1.4" height="2.9" fill="#e8e8e8"/>
<rect x="1141.7" y="844.6" width="1.4" height="2.9" fill="#e8e8e8"/>
<rect x="1175.3" y="844.6" width="1.4" height="2.9" fill="#e8e8e8"/>
<rect x="1208.9" y="844.6" width="1.4" height="2.9" fill="#e8e8e8"/>
<text x="1209.6" y="839" font-size="10.5" fill="#d4d4d4" text-anchor="middle" >16.00</text>
<rect x="1242.5" y="844.6" width="1.4" height="2.9" fill="#e8e8e8"/>
<rect x="1276.1" y="844.6" width="1.4" height="2.9" fill="#e8e8e8"/>
</g>
<rect x="694.7" y="556" width="2.8" height="291.5" fill="#4a7ec2"/>
<text x="694.6" y="552.2" font-size="11" fill="#fff" text-anchor="middle" stroke="#fff" stroke-width=".28" >8.10</text>
<text x="1278" y="552" font-size="10.5" fill="#d2d2d2" text-anchor="end" >Beach Day (2) (30 fps)  15.17 duration</text>
<path d="M79.5 862h9.8q1.8 0 1.8 1.8v16.4q0 1.8-1.8 1.8h-14q-1.8 0-1.8-1.8v-9 M73.3 866.5h8 M77.3 862.5v8 M83 872.8h5.5 M76.5 875.8h5 M83.5 875.8h5 M76.5 878.8h12" stroke="#fff" fill="none" stroke-width="1.3" stroke-linecap="round" stroke-linejoin="round"/><path d="M143 862h-15.5q-1.8 0-1.8 1.8v16.4q0 1.8 1.8 1.8h15.5 M133.8 862v20" stroke="#fff" fill="none" stroke-width="1.3" stroke-linecap="round" stroke-linejoin="round"/><circle cx="129.7" cy="866.2" r="1.5" fill="#fff"/><circle cx="129.7" cy="872" r="1.5" fill="#fff"/><circle cx="129.7" cy="877.8" r="1.5" fill="#fff"/><path d="M137 866.2h6 M137 872h6 M137 877.8h6" stroke="#fff" stroke-width="1.3"/><path d="M179.4 862v5.2 M182.3 862v5.2 M185.2 862v5.2 M188.1 862v5.2 M191 862v5.2 M179.4 870v5.2 M182.3 870v5.2 M185.2 870v5.2 M179.4 878v5.2 M182.3 878v5.2 M185.2 878v5.2 M188.1 878v5.2 M191 878v5.2 M193.9 878v5.2 M196.8 878v5.2 M199.7 878v5.2 " stroke="#fff" stroke-width="1.2" fill="none"/><path d="M406 865.5v-2.5q0-1.5 1.5-1.5h20q1.5 0 1.5 1.5v13.5q0 1.5-1.5 1.5h-1.5" stroke="#4d4d4d" fill="none" stroke-width="1.2" stroke-linecap="round" stroke-linejoin="round"/><rect x="403.3" y="866" width="22.5" height="16" rx="1.5" stroke="#4d4d4d" fill="none" stroke-width="1.2" stroke-linecap="round" stroke-linejoin="round"/><path d="M414.5 869.5v9 M410 874h9" stroke="#4d4d4d" fill="none" stroke-width="1.2" stroke-linecap="round" stroke-linejoin="round"/><path d="M476 865.5v-2.5q0-1.5-1.5-1.5h-20q-1.5 0-1.5 1.5v13.5q0 1.5 1.5 1.5h1.5" stroke="#4d4d4d" fill="none" stroke-width="1.2" stroke-linecap="round" stroke-linejoin="round"/><rect x="456.2" y="866" width="22.5" height="16" rx="1.5" stroke="#4d4d4d" fill="none" stroke-width="1.2" stroke-linecap="round" stroke-linejoin="round"/><path d="M461 874h1 M463.5 872v4 M465.7 870v8 M467.9 872.5v3 M470.1 870v8 M472.3 872v4 M474.5 874h1" stroke="#4d4d4d" fill="none" stroke-width="1.1" stroke-linecap="round" stroke-linejoin="round"/><g transform="rotate(-45 516 872)" stroke="#4d4d4d" fill="none" stroke-width="1.5" stroke-linecap="round" stroke-linejoin="round"><rect x="504" y="868" width="13" height="8" rx="4"/><rect x="515" y="868" width="13" height="8" rx="4"/></g><g transform="rotate(-45 565 872)" stroke="#4d4d4d" fill="none" stroke-width="1.3" stroke-linecap="round" stroke-linejoin="round"><path d="M553 872l5-3.2h19q1.5 0 1.5 1.5v3.4q0 1.5-1.5 1.5h-19z M558 868.8v6.4"/></g><path d="M604 866l22-3.5l.8 3" stroke="#4d4d4d" fill="none" stroke-width="1.2" stroke-linecap="round" stroke-linejoin="round"/><rect x="602.5" y="866" width="26" height="16.5" rx="1.5" stroke="#4d4d4d" fill="none" stroke-width="1.2" stroke-linecap="round" stroke-linejoin="round"/><path d="M615.5 868.5l1.7 3.6l3.9.5l-2.9 2.7l.8 3.9l-3.5-2l-3.5 2l.8-3.9l-2.9-2.7l3.9-.5z" stroke="#4d4d4d" fill="none" stroke-width="1.1" stroke-linecap="round" stroke-linejoin="round"/><path d="M659 864h-5q-1.5 0-1.5 1.5v14.5 M671 864h5q1.5 0 1.5 1.5v14.5 M657 869h16 M657 873h16 M657 877h16" stroke="#4d4d4d" fill="none" stroke-width="1.2" stroke-linecap="round" stroke-linejoin="round"/><rect x="659.5" y="861.5" width="11" height="4.5" rx="2" stroke="#4d4d4d" fill="none" stroke-width="1.2" stroke-linecap="round" stroke-linejoin="round"/><path d="M755 865.2h-17.5q-1.8 0-1.8 1.8v13.6q0 1.8 1.8 1.8h22.5q1.8 0 1.8-1.8v-8.6 M742.5 872.5l5 4.8l12-13.3" stroke="#fff" fill="none" stroke-width="1.4" stroke-linecap="round" stroke-linejoin="round"/><g stroke="#fff" fill="none" stroke-width="1.25" stroke-linecap="round" stroke-linejoin="round"><circle cx="790.6" cy="865.2" r="2.9"/><circle cx="790.6" cy="878.8" r="2.9"/><path d="M793 866.8L811 879.6Q806.5 880.8 802.8 878.2L792.2 868.6 M793 877.2L811 864.4Q806.5 863.2 802.8 865.8L792.2 875.4"/></g><circle cx="848" cy="872" r="10.8" stroke="#fff" fill="none" stroke-width="1.3" stroke-linecap="round" stroke-linejoin="round"/><path d="M848 867.2v9.6 M843.2 872h9.6" stroke="#fff" fill="none" stroke-width="1.3" stroke-linecap="round" stroke-linejoin="round"/><path d="M922.8 865.2h17.4 M927.5 865v-2.7q0-1 1-1h6q1 0 1 1v2.7 M924.5 865.5v15q0 1.5 1.5 1.5h11q1.5 0 1.5-1.5v-15 M928 869v10 M931.5 869v10 M935 869v10" stroke="#4d4d4d" fill="none" stroke-width="1.3" stroke-linecap="round" stroke-linejoin="round"/><rect x="1147.5" y="862.5" width="7.3" height="10" rx="1" stroke="#fff" fill="none" stroke-width="1.3" stroke-linecap="round" stroke-linejoin="round"/><rect x="1157" y="862.5" width="10.5" height="10" rx="1" stroke="#fff" fill="none" stroke-width="1.3" stroke-linecap="round" stroke-linejoin="round"/><rect x="1147.5" y="874.8" width="20" height="7.5" rx="1" stroke="#fff" fill="none" stroke-width="1.3" stroke-linecap="round" stroke-linejoin="round"/><path d="M1208 865.5h-3.5q-1.8 0-1.8 1.8v13.2q0 1.8 1.8 1.8h14.4q1.8 0 1.8-1.8v-13.2q0-1.8-1.8-1.8h-3.5 M1211.7 861.2v13.6 M1207.8 865l3.9-4l3.9 4" stroke="#fff" fill="none" stroke-width="1.3" stroke-linecap="round" stroke-linejoin="round"/><polygon points="1263.7,864.3 1263.9,861.3 1267.1,861.3 1267.3,864.3 1269.9,865.4 1272.2,863.5 1274.4,865.7 1272.5,868 1273.6,870.6 1276.6,870.8 1276.6,874 1273.6,874.2 1272.5,876.8 1274.4,879.1 1272.2,881.3 1269.9,879.4 1267.3,880.5 1267.1,883.5 1263.9,883.5 1263.7,880.5 1261.1,879.4 1258.8,881.3 1256.6,879.1 1258.5,876.8 1257.4,874.2 1254.4,874 1254.4,870.8 1257.4,870.6 1258.5,868 1256.6,865.7 1258.8,863.5 1261.1,865.4" stroke="#fff" fill="none" stroke-width="1.3" stroke-linecap="round" stroke-linejoin="round"/>
<text x="1265.5" y="877" font-size="12.5" fill="#fff" text-anchor="middle" font-weight="bold" >?</text>
<rect x="510.5" y="899" width="327" height="5.5" rx="2.75" fill="#fff"/>
</g>
<rect x="59.3" y="59.3" width="1228" height="856.7" rx="16" fill="none" stroke="#2b2b2b" stroke-width="1"/>
<filter id="fThin" filterUnits="userSpaceOnUse" x="250" y="1120" width="850" height="245"><feMorphology operator="erode" radius="0 3"/></filter>
<g filter="url(#fThin)">
<text transform="scale(0.505 1)" x="664.2 761.4 867.1 972.3 1065.3 1159.2 1231.7 1309.5 1407.3 1516 1592.1 1658.8 1755.8 1829.3 1902.8 1998.4" y="1246.5" font-size="134" fill="#1c1c1e" stroke="#1c1c1e" stroke-width="4.8" stroke-linejoin="round" vector-effect="non-scaling-stroke" text-anchor="middle" style="paint-order:stroke">SHOOTS AND EDITS</text>
<text transform="scale(0.505 1)" x="900.4 1004.8 1079.2 1153.9 1262.4 1336.6 1412.1 1488.9 1565.9 1665.7 1760" y="1360.5" font-size="134" fill="#1c1c1e" stroke="#1c1c1e" stroke-width="4.8" stroke-linejoin="round" vector-effect="non-scaling-stroke" text-anchor="middle" style="paint-order:stroke">4K HD VIDEO</text>
</g>
<path d="M1072.5 1191.5 C1112 1180 1150 1140 1148 1095 C1147 1072 1143 1056 1138.5 1044" fill="none" stroke="#1c1c1e" stroke-width="7.4" stroke-linecap="round"/>
<path d="M1125 1071 L1138.3 1043.6 L1164.3 1064.5" fill="none" stroke="#1c1c1e" stroke-width="7.4" stroke-linecap="round" stroke-linejoin="round"/>
</svg></body></html>
